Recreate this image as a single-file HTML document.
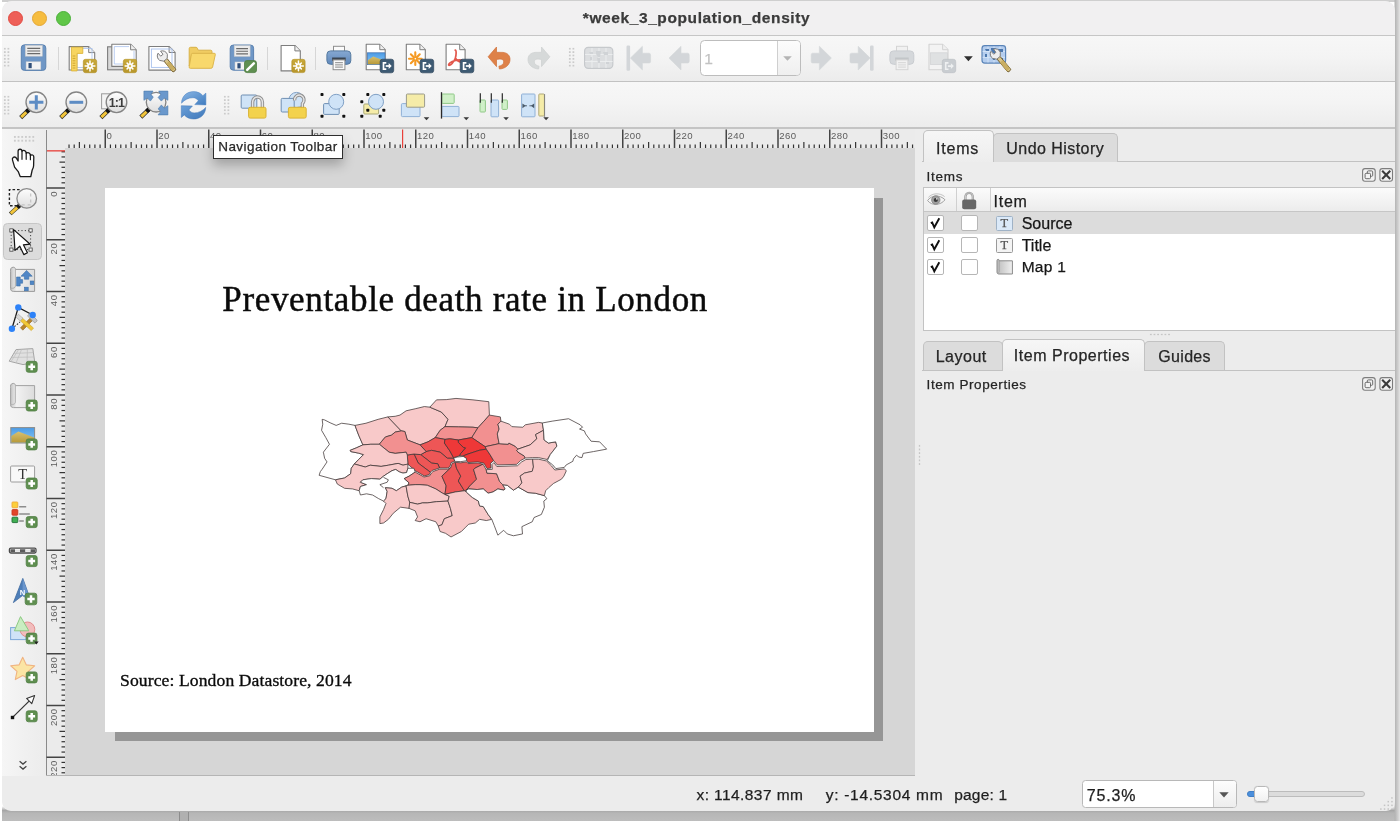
<!DOCTYPE html><html lang="en"><head><meta charset="utf-8"><title>*week_3_population_density</title><style>
*{box-sizing:border-box}
html,body{margin:0;padding:0}
body{width:1400px;height:822px;position:relative;overflow:hidden;background:#fff;font-family:"Liberation Sans",sans-serif;color:#222}
.abs{position:absolute}
#shadow{left:2px;top:0;width:1398px;height:821px;background:linear-gradient(90deg,rgba(0,0,0,0) 0,rgba(0,0,0,0) 1392px,#b4b4b4 1393px,#cfcfcf 1396px,#e4e4e4 1398px),linear-gradient(180deg,#cfcfcf 0,#cfcfcf 2px,rgba(0,0,0,0) 2px,rgba(0,0,0,0) 806px,#a6a6a6 810.5px,#b6b6b6 813px,#bdbdbd 821px)}
#win{left:2px;top:1px;width:1393px;height:810px;border-radius:10px 10px 9px 9px;background:#ececec;overflow:hidden}
#titlebar{left:0;top:0;width:1393px;height:34px;background:#f1f0f1}
#title{left:0;width:1393px;top:7px;text-align:center;font-weight:700;font-size:15.5px;letter-spacing:.6px;color:#3b3b3b;text-indent:-7px}
.tl{width:13px;height:13px;border-radius:50%;top:10.7px}
.hl{height:1px;background:#c3c3c3;left:0;width:1393px}
#tb1{left:0;top:35px;width:1393px;height:45px;background:#f5f5f5}
#tb2{left:0;top:81px;width:1393px;height:46px;background:#f4f4f4}
.rl{font-family:"Liberation Sans",sans-serif;font-size:9.6px;letter-spacing:.5px;fill:#5c5c5c;-webkit-text-stroke:0}
.tab{top:0;height:30px;border:1px solid #c2c2c2;border-bottom:none;border-radius:5px 5px 0 0;font-size:16px;color:#262626;text-align:center;background:#dcdcdc}
.tab.on{background:linear-gradient(#f6f6f6,#ededed);}
.ico{position:absolute;overflow:visible}
.cb{position:absolute;width:16.6px;height:16.2px;background:#fff;border:1.2px solid #b6b6b6;border-radius:2px}
.row{position:absolute;left:0;width:470px;height:22px;font-size:15px;letter-spacing:.2px;color:#1c1c1c}
.grip{position:absolute;width:7.2px;height:20.4px;background-image:radial-gradient(circle,#cbcbcb 0.75px,rgba(0,0,0,0) 1.15px);background-size:3.6px 3.4px}
.dt{position:absolute;font-size:13.5px;letter-spacing:.3px;color:#262626}
.st{position:absolute;top:786px;font-size:15.5px;color:#1e1e1e;white-space:pre}
</style></head><body><div id="shadow" class="abs"></div><div class="abs" style="left:179px;top:811.5px;width:10px;height:9.3px;background:#b0b0b0;border-left:1.3px solid #8c8c8c;border-right:1.8px solid #8e8e8e"></div><div id="win" class="abs"><div class="abs" style="left:-2px;top:-1px;width:1400px;height:822px;will-change:transform;-webkit-text-stroke:.25px"><div class="abs" style="left:0;top:0;width:1400px;height:35px;background:#f1f0f1"></div><div class="abs tl" style="left:7.9px;top:10.9px;width:15px;height:15px;background:#ee5f58;border:1px solid #e24b42"></div><div class="abs tl" style="left:32.1px;top:10.9px;width:15px;height:15px;background:#f6bd40;border:1px solid #e4a634"></div><div class="abs tl" style="left:56.3px;top:10.9px;width:15px;height:15px;background:#60c648;border:1px solid #4bb03a"></div><div id="title" class="abs" style="left:0;width:1400px;top:8.9px">*week_3_population_density</div><div class="abs" style="left:0;top:35px;width:1400px;height:1.4px;background:#c6c6c6"></div><div class="abs" style="left:0;top:36px;width:1400px;height:45px;background:linear-gradient(#f7f7f7,#f4f4f4 45%,#ececec)"></div><div class="abs" style="left:0;top:80.5px;width:1400px;height:1.6px;background:#c2c2c2"></div><div class="abs" style="left:0;top:82px;width:1400px;height:46px;background:linear-gradient(#f7f7f7,#f4f4f4 45%,#ececec)"></div><div class="abs" style="left:0;top:127.3px;width:1400px;height:1.5px;background:#c4c4c4"></div><div class="grip" style="left:2.9px;top:47.3px"></div><div class="abs" style="left:58px;top:47px;width:1px;height:23px;background:#d6d6d6"></div><div class="abs" style="left:267px;top:47px;width:1px;height:23px;background:#d6d6d6"></div><div class="abs" style="left:315px;top:47px;width:1px;height:23px;background:#d6d6d6"></div><div class="grip" style="left:568.1px;top:47.3px"></div><div class="abs" style="left:699.5px;top:40.3px;width:101.2px;height:36px;background:#fff;border:1.5px solid #bdbdbd;border-radius:4.5px;overflow:hidden"><div class="abs" style="left:76px;top:0;width:24px;height:34px;background:linear-gradient(#fcfcfc,#efefef);border-left:1px solid #cfcfcf"></div></div><div class="abs" style="left:704.3px;top:49.5px;font-size:15.5px;color:#c2c2c2">1</div><svg class="ico" style="left:783px;top:55.5px" width="9" height="5" viewBox="0 0 9 5"><path d="M0.2 0.2 H8.8 L4.5 4.8 Z" fill="#b4b4b4"/></svg><div class="grip" style="left:2.9px;top:94.6px"></div><div class="grip" style="left:222.5px;top:94.6px"></div><div class="abs" style="left:0;top:129px;width:46px;height:647px;background:linear-gradient(90deg,#f6f6f6,#efefef 30px,#ececec)"></div><div class="abs" style="left:12.8px;top:134.5px;width:22.1px;height:7.6px;background-image:radial-gradient(circle,#cbcbcb 0.75px,rgba(0,0,0,0) 1.15px);background-size:3.69px 3.8px"></div><div class="abs" style="left:3.3px;top:223.3px;width:38.5px;height:36.8px;border-radius:4.5px;background:#dcdcdc;border:1px solid #c6c6c6"></div><svg class="ico" style="left:18px;top:760px" width="10" height="12" viewBox="0 0 10 12"><path d="M1.6 1.3 L5 4.1 L8.4 1.3 M1.6 6.3 L5 9.1 L8.4 6.3" fill="none" stroke="#444" stroke-width="1.25"/></svg><div class="abs" style="left:46px;top:129px;width:869px;height:647px;background:#ebebeb"></div><div class="abs" style="left:65px;top:148px;width:850px;height:627.5px;background:#d6d6d6"></div><div class="abs" style="left:45.7px;top:129.5px;width:1.4px;height:646px;background:#8a8a8a"></div><div class="abs" style="left:46px;top:775px;width:869px;height:1px;background:#b5b5b5"></div><svg class="abs" style="left:0;top:0" width="920" height="775" viewBox="0 0 920 775"><rect x="68.43" y="144.5" width="1.2" height="3.5" fill="#333"/><rect x="73.60" y="144.5" width="1.2" height="3.5" fill="#333"/><rect x="78.78" y="142" width="1.2" height="6" fill="#333"/><rect x="83.95" y="144.5" width="1.2" height="3.5" fill="#333"/><rect x="89.12" y="144.5" width="1.2" height="3.5" fill="#333"/><rect x="94.30" y="144.5" width="1.2" height="3.5" fill="#333"/><rect x="99.48" y="144.5" width="1.2" height="3.5" fill="#333"/><rect x="104.50" y="129.5" width="1.5" height="18.5" fill="#444"/><text x="106.45" y="138.6" class="rl">0</text><rect x="109.83" y="144.5" width="1.2" height="3.5" fill="#333"/><rect x="115.00" y="144.5" width="1.2" height="3.5" fill="#333"/><rect x="120.18" y="144.5" width="1.2" height="3.5" fill="#333"/><rect x="125.35" y="144.5" width="1.2" height="3.5" fill="#333"/><rect x="130.53" y="142" width="1.2" height="6" fill="#333"/><rect x="135.70" y="144.5" width="1.2" height="3.5" fill="#333"/><rect x="140.88" y="144.5" width="1.2" height="3.5" fill="#333"/><rect x="146.05" y="144.5" width="1.2" height="3.5" fill="#333"/><rect x="151.22" y="144.5" width="1.2" height="3.5" fill="#333"/><rect x="156.25" y="129.5" width="1.5" height="18.5" fill="#444"/><text x="158.20" y="138.6" class="rl">20</text><rect x="161.58" y="144.5" width="1.2" height="3.5" fill="#333"/><rect x="166.75" y="144.5" width="1.2" height="3.5" fill="#333"/><rect x="171.92" y="144.5" width="1.2" height="3.5" fill="#333"/><rect x="177.10" y="144.5" width="1.2" height="3.5" fill="#333"/><rect x="182.28" y="142" width="1.2" height="6" fill="#333"/><rect x="187.45" y="144.5" width="1.2" height="3.5" fill="#333"/><rect x="192.62" y="144.5" width="1.2" height="3.5" fill="#333"/><rect x="197.80" y="144.5" width="1.2" height="3.5" fill="#333"/><rect x="202.97" y="144.5" width="1.2" height="3.5" fill="#333"/><rect x="208.00" y="129.5" width="1.5" height="18.5" fill="#444"/><text x="209.95" y="138.6" class="rl">40</text><rect x="213.33" y="144.5" width="1.2" height="3.5" fill="#333"/><rect x="218.50" y="144.5" width="1.2" height="3.5" fill="#333"/><rect x="223.67" y="144.5" width="1.2" height="3.5" fill="#333"/><rect x="228.85" y="144.5" width="1.2" height="3.5" fill="#333"/><rect x="234.03" y="142" width="1.2" height="6" fill="#333"/><rect x="239.20" y="144.5" width="1.2" height="3.5" fill="#333"/><rect x="244.38" y="144.5" width="1.2" height="3.5" fill="#333"/><rect x="249.55" y="144.5" width="1.2" height="3.5" fill="#333"/><rect x="254.72" y="144.5" width="1.2" height="3.5" fill="#333"/><rect x="259.75" y="129.5" width="1.5" height="18.5" fill="#444"/><text x="261.70" y="138.6" class="rl">60</text><rect x="265.07" y="144.5" width="1.2" height="3.5" fill="#333"/><rect x="270.25" y="144.5" width="1.2" height="3.5" fill="#333"/><rect x="275.42" y="144.5" width="1.2" height="3.5" fill="#333"/><rect x="280.60" y="144.5" width="1.2" height="3.5" fill="#333"/><rect x="285.77" y="142" width="1.2" height="6" fill="#333"/><rect x="290.95" y="144.5" width="1.2" height="3.5" fill="#333"/><rect x="296.12" y="144.5" width="1.2" height="3.5" fill="#333"/><rect x="301.30" y="144.5" width="1.2" height="3.5" fill="#333"/><rect x="306.47" y="144.5" width="1.2" height="3.5" fill="#333"/><rect x="311.50" y="129.5" width="1.5" height="18.5" fill="#444"/><text x="313.45" y="138.6" class="rl">80</text><rect x="316.82" y="144.5" width="1.2" height="3.5" fill="#333"/><rect x="322.00" y="144.5" width="1.2" height="3.5" fill="#333"/><rect x="327.17" y="144.5" width="1.2" height="3.5" fill="#333"/><rect x="332.35" y="144.5" width="1.2" height="3.5" fill="#333"/><rect x="337.52" y="142" width="1.2" height="6" fill="#333"/><rect x="342.70" y="144.5" width="1.2" height="3.5" fill="#333"/><rect x="347.88" y="144.5" width="1.2" height="3.5" fill="#333"/><rect x="353.05" y="144.5" width="1.2" height="3.5" fill="#333"/><rect x="358.22" y="144.5" width="1.2" height="3.5" fill="#333"/><rect x="363.25" y="129.5" width="1.5" height="18.5" fill="#444"/><text x="365.20" y="138.6" class="rl">100</text><rect x="368.57" y="144.5" width="1.2" height="3.5" fill="#333"/><rect x="373.75" y="144.5" width="1.2" height="3.5" fill="#333"/><rect x="378.92" y="144.5" width="1.2" height="3.5" fill="#333"/><rect x="384.10" y="144.5" width="1.2" height="3.5" fill="#333"/><rect x="389.27" y="142" width="1.2" height="6" fill="#333"/><rect x="394.45" y="144.5" width="1.2" height="3.5" fill="#333"/><rect x="399.62" y="144.5" width="1.2" height="3.5" fill="#333"/><rect x="404.80" y="144.5" width="1.2" height="3.5" fill="#333"/><rect x="409.97" y="144.5" width="1.2" height="3.5" fill="#333"/><rect x="415.00" y="129.5" width="1.5" height="18.5" fill="#444"/><text x="416.95" y="138.6" class="rl">120</text><rect x="420.32" y="144.5" width="1.2" height="3.5" fill="#333"/><rect x="425.50" y="144.5" width="1.2" height="3.5" fill="#333"/><rect x="430.67" y="144.5" width="1.2" height="3.5" fill="#333"/><rect x="435.85" y="144.5" width="1.2" height="3.5" fill="#333"/><rect x="441.02" y="142" width="1.2" height="6" fill="#333"/><rect x="446.20" y="144.5" width="1.2" height="3.5" fill="#333"/><rect x="451.37" y="144.5" width="1.2" height="3.5" fill="#333"/><rect x="456.55" y="144.5" width="1.2" height="3.5" fill="#333"/><rect x="461.72" y="144.5" width="1.2" height="3.5" fill="#333"/><rect x="466.75" y="129.5" width="1.5" height="18.5" fill="#444"/><text x="468.70" y="138.6" class="rl">140</text><rect x="472.07" y="144.5" width="1.2" height="3.5" fill="#333"/><rect x="477.25" y="144.5" width="1.2" height="3.5" fill="#333"/><rect x="482.42" y="144.5" width="1.2" height="3.5" fill="#333"/><rect x="487.60" y="144.5" width="1.2" height="3.5" fill="#333"/><rect x="492.77" y="142" width="1.2" height="6" fill="#333"/><rect x="497.95" y="144.5" width="1.2" height="3.5" fill="#333"/><rect x="503.12" y="144.5" width="1.2" height="3.5" fill="#333"/><rect x="508.30" y="144.5" width="1.2" height="3.5" fill="#333"/><rect x="513.48" y="144.5" width="1.2" height="3.5" fill="#333"/><rect x="518.50" y="129.5" width="1.5" height="18.5" fill="#444"/><text x="520.45" y="138.6" class="rl">160</text><rect x="523.82" y="144.5" width="1.2" height="3.5" fill="#333"/><rect x="529.00" y="144.5" width="1.2" height="3.5" fill="#333"/><rect x="534.17" y="144.5" width="1.2" height="3.5" fill="#333"/><rect x="539.35" y="144.5" width="1.2" height="3.5" fill="#333"/><rect x="544.52" y="142" width="1.2" height="6" fill="#333"/><rect x="549.70" y="144.5" width="1.2" height="3.5" fill="#333"/><rect x="554.87" y="144.5" width="1.2" height="3.5" fill="#333"/><rect x="560.05" y="144.5" width="1.2" height="3.5" fill="#333"/><rect x="565.23" y="144.5" width="1.2" height="3.5" fill="#333"/><rect x="570.25" y="129.5" width="1.5" height="18.5" fill="#444"/><text x="572.20" y="138.6" class="rl">180</text><rect x="575.57" y="144.5" width="1.2" height="3.5" fill="#333"/><rect x="580.75" y="144.5" width="1.2" height="3.5" fill="#333"/><rect x="585.92" y="144.5" width="1.2" height="3.5" fill="#333"/><rect x="591.10" y="144.5" width="1.2" height="3.5" fill="#333"/><rect x="596.27" y="142" width="1.2" height="6" fill="#333"/><rect x="601.45" y="144.5" width="1.2" height="3.5" fill="#333"/><rect x="606.62" y="144.5" width="1.2" height="3.5" fill="#333"/><rect x="611.80" y="144.5" width="1.2" height="3.5" fill="#333"/><rect x="616.97" y="144.5" width="1.2" height="3.5" fill="#333"/><rect x="622.00" y="129.5" width="1.5" height="18.5" fill="#444"/><text x="623.95" y="138.6" class="rl">200</text><rect x="627.32" y="144.5" width="1.2" height="3.5" fill="#333"/><rect x="632.50" y="144.5" width="1.2" height="3.5" fill="#333"/><rect x="637.67" y="144.5" width="1.2" height="3.5" fill="#333"/><rect x="642.85" y="144.5" width="1.2" height="3.5" fill="#333"/><rect x="648.02" y="142" width="1.2" height="6" fill="#333"/><rect x="653.20" y="144.5" width="1.2" height="3.5" fill="#333"/><rect x="658.38" y="144.5" width="1.2" height="3.5" fill="#333"/><rect x="663.55" y="144.5" width="1.2" height="3.5" fill="#333"/><rect x="668.72" y="144.5" width="1.2" height="3.5" fill="#333"/><rect x="673.75" y="129.5" width="1.5" height="18.5" fill="#444"/><text x="675.70" y="138.6" class="rl">220</text><rect x="679.07" y="144.5" width="1.2" height="3.5" fill="#333"/><rect x="684.25" y="144.5" width="1.2" height="3.5" fill="#333"/><rect x="689.42" y="144.5" width="1.2" height="3.5" fill="#333"/><rect x="694.60" y="144.5" width="1.2" height="3.5" fill="#333"/><rect x="699.77" y="142" width="1.2" height="6" fill="#333"/><rect x="704.95" y="144.5" width="1.2" height="3.5" fill="#333"/><rect x="710.12" y="144.5" width="1.2" height="3.5" fill="#333"/><rect x="715.30" y="144.5" width="1.2" height="3.5" fill="#333"/><rect x="720.47" y="144.5" width="1.2" height="3.5" fill="#333"/><rect x="725.50" y="129.5" width="1.5" height="18.5" fill="#444"/><text x="727.45" y="138.6" class="rl">240</text><rect x="730.82" y="144.5" width="1.2" height="3.5" fill="#333"/><rect x="736.00" y="144.5" width="1.2" height="3.5" fill="#333"/><rect x="741.17" y="144.5" width="1.2" height="3.5" fill="#333"/><rect x="746.35" y="144.5" width="1.2" height="3.5" fill="#333"/><rect x="751.52" y="142" width="1.2" height="6" fill="#333"/><rect x="756.70" y="144.5" width="1.2" height="3.5" fill="#333"/><rect x="761.88" y="144.5" width="1.2" height="3.5" fill="#333"/><rect x="767.05" y="144.5" width="1.2" height="3.5" fill="#333"/><rect x="772.22" y="144.5" width="1.2" height="3.5" fill="#333"/><rect x="777.25" y="129.5" width="1.5" height="18.5" fill="#444"/><text x="779.20" y="138.6" class="rl">260</text><rect x="782.57" y="144.5" width="1.2" height="3.5" fill="#333"/><rect x="787.75" y="144.5" width="1.2" height="3.5" fill="#333"/><rect x="792.92" y="144.5" width="1.2" height="3.5" fill="#333"/><rect x="798.10" y="144.5" width="1.2" height="3.5" fill="#333"/><rect x="803.27" y="142" width="1.2" height="6" fill="#333"/><rect x="808.45" y="144.5" width="1.2" height="3.5" fill="#333"/><rect x="813.62" y="144.5" width="1.2" height="3.5" fill="#333"/><rect x="818.80" y="144.5" width="1.2" height="3.5" fill="#333"/><rect x="823.97" y="144.5" width="1.2" height="3.5" fill="#333"/><rect x="829.00" y="129.5" width="1.5" height="18.5" fill="#444"/><text x="830.95" y="138.6" class="rl">280</text><rect x="834.32" y="144.5" width="1.2" height="3.5" fill="#333"/><rect x="839.50" y="144.5" width="1.2" height="3.5" fill="#333"/><rect x="844.67" y="144.5" width="1.2" height="3.5" fill="#333"/><rect x="849.85" y="144.5" width="1.2" height="3.5" fill="#333"/><rect x="855.02" y="142" width="1.2" height="6" fill="#333"/><rect x="860.20" y="144.5" width="1.2" height="3.5" fill="#333"/><rect x="865.38" y="144.5" width="1.2" height="3.5" fill="#333"/><rect x="870.55" y="144.5" width="1.2" height="3.5" fill="#333"/><rect x="875.72" y="144.5" width="1.2" height="3.5" fill="#333"/><rect x="880.75" y="129.5" width="1.5" height="18.5" fill="#444"/><text x="882.70" y="138.6" class="rl">300</text><rect x="886.07" y="144.5" width="1.2" height="3.5" fill="#333"/><rect x="891.25" y="144.5" width="1.2" height="3.5" fill="#333"/><rect x="896.42" y="144.5" width="1.2" height="3.5" fill="#333"/><rect x="901.60" y="144.5" width="1.2" height="3.5" fill="#333"/><rect x="906.77" y="142" width="1.2" height="6" fill="#333"/><rect x="911.95" y="144.5" width="1.2" height="3.5" fill="#333"/><rect x="61.5" y="151.18" width="3.5" height="1.2" fill="#333"/><rect x="61.5" y="156.35" width="3.5" height="1.2" fill="#333"/><rect x="59.5" y="161.53" width="5.5" height="1.2" fill="#333"/><rect x="61.5" y="166.70" width="3.5" height="1.2" fill="#333"/><rect x="61.5" y="171.88" width="3.5" height="1.2" fill="#333"/><rect x="61.5" y="177.05" width="3.5" height="1.2" fill="#333"/><rect x="61.5" y="182.22" width="3.5" height="1.2" fill="#333"/><rect x="46.5" y="187.25" width="18.5" height="1.5" fill="#444"/><text transform="translate(56.5,191.00) rotate(-90)" text-anchor="end" class="rl">0</text><rect x="61.5" y="192.58" width="3.5" height="1.2" fill="#333"/><rect x="61.5" y="197.75" width="3.5" height="1.2" fill="#333"/><rect x="61.5" y="202.93" width="3.5" height="1.2" fill="#333"/><rect x="61.5" y="208.10" width="3.5" height="1.2" fill="#333"/><rect x="59.5" y="213.28" width="5.5" height="1.2" fill="#333"/><rect x="61.5" y="218.45" width="3.5" height="1.2" fill="#333"/><rect x="61.5" y="223.62" width="3.5" height="1.2" fill="#333"/><rect x="61.5" y="228.80" width="3.5" height="1.2" fill="#333"/><rect x="61.5" y="233.97" width="3.5" height="1.2" fill="#333"/><rect x="46.5" y="239.00" width="18.5" height="1.5" fill="#444"/><text transform="translate(56.5,242.75) rotate(-90)" text-anchor="end" class="rl">20</text><rect x="61.5" y="244.33" width="3.5" height="1.2" fill="#333"/><rect x="61.5" y="249.50" width="3.5" height="1.2" fill="#333"/><rect x="61.5" y="254.67" width="3.5" height="1.2" fill="#333"/><rect x="61.5" y="259.85" width="3.5" height="1.2" fill="#333"/><rect x="59.5" y="265.02" width="5.5" height="1.2" fill="#333"/><rect x="61.5" y="270.20" width="3.5" height="1.2" fill="#333"/><rect x="61.5" y="275.38" width="3.5" height="1.2" fill="#333"/><rect x="61.5" y="280.55" width="3.5" height="1.2" fill="#333"/><rect x="61.5" y="285.72" width="3.5" height="1.2" fill="#333"/><rect x="46.5" y="290.75" width="18.5" height="1.5" fill="#444"/><text transform="translate(56.5,294.50) rotate(-90)" text-anchor="end" class="rl">40</text><rect x="61.5" y="296.07" width="3.5" height="1.2" fill="#333"/><rect x="61.5" y="301.25" width="3.5" height="1.2" fill="#333"/><rect x="61.5" y="306.42" width="3.5" height="1.2" fill="#333"/><rect x="61.5" y="311.60" width="3.5" height="1.2" fill="#333"/><rect x="59.5" y="316.77" width="5.5" height="1.2" fill="#333"/><rect x="61.5" y="321.95" width="3.5" height="1.2" fill="#333"/><rect x="61.5" y="327.12" width="3.5" height="1.2" fill="#333"/><rect x="61.5" y="332.30" width="3.5" height="1.2" fill="#333"/><rect x="61.5" y="337.47" width="3.5" height="1.2" fill="#333"/><rect x="46.5" y="342.50" width="18.5" height="1.5" fill="#444"/><text transform="translate(56.5,346.25) rotate(-90)" text-anchor="end" class="rl">60</text><rect x="61.5" y="347.82" width="3.5" height="1.2" fill="#333"/><rect x="61.5" y="353.00" width="3.5" height="1.2" fill="#333"/><rect x="61.5" y="358.17" width="3.5" height="1.2" fill="#333"/><rect x="61.5" y="363.35" width="3.5" height="1.2" fill="#333"/><rect x="59.5" y="368.52" width="5.5" height="1.2" fill="#333"/><rect x="61.5" y="373.70" width="3.5" height="1.2" fill="#333"/><rect x="61.5" y="378.88" width="3.5" height="1.2" fill="#333"/><rect x="61.5" y="384.05" width="3.5" height="1.2" fill="#333"/><rect x="61.5" y="389.22" width="3.5" height="1.2" fill="#333"/><rect x="46.5" y="394.25" width="18.5" height="1.5" fill="#444"/><text transform="translate(56.5,398.00) rotate(-90)" text-anchor="end" class="rl">80</text><rect x="61.5" y="399.57" width="3.5" height="1.2" fill="#333"/><rect x="61.5" y="404.75" width="3.5" height="1.2" fill="#333"/><rect x="61.5" y="409.92" width="3.5" height="1.2" fill="#333"/><rect x="61.5" y="415.10" width="3.5" height="1.2" fill="#333"/><rect x="59.5" y="420.27" width="5.5" height="1.2" fill="#333"/><rect x="61.5" y="425.45" width="3.5" height="1.2" fill="#333"/><rect x="61.5" y="430.62" width="3.5" height="1.2" fill="#333"/><rect x="61.5" y="435.80" width="3.5" height="1.2" fill="#333"/><rect x="61.5" y="440.97" width="3.5" height="1.2" fill="#333"/><rect x="46.5" y="446.00" width="18.5" height="1.5" fill="#444"/><text transform="translate(56.5,449.75) rotate(-90)" text-anchor="end" class="rl">100</text><rect x="61.5" y="451.32" width="3.5" height="1.2" fill="#333"/><rect x="61.5" y="456.50" width="3.5" height="1.2" fill="#333"/><rect x="61.5" y="461.67" width="3.5" height="1.2" fill="#333"/><rect x="61.5" y="466.85" width="3.5" height="1.2" fill="#333"/><rect x="59.5" y="472.02" width="5.5" height="1.2" fill="#333"/><rect x="61.5" y="477.20" width="3.5" height="1.2" fill="#333"/><rect x="61.5" y="482.37" width="3.5" height="1.2" fill="#333"/><rect x="61.5" y="487.55" width="3.5" height="1.2" fill="#333"/><rect x="61.5" y="492.72" width="3.5" height="1.2" fill="#333"/><rect x="46.5" y="497.75" width="18.5" height="1.5" fill="#444"/><text transform="translate(56.5,501.50) rotate(-90)" text-anchor="end" class="rl">120</text><rect x="61.5" y="503.07" width="3.5" height="1.2" fill="#333"/><rect x="61.5" y="508.25" width="3.5" height="1.2" fill="#333"/><rect x="61.5" y="513.42" width="3.5" height="1.2" fill="#333"/><rect x="61.5" y="518.60" width="3.5" height="1.2" fill="#333"/><rect x="59.5" y="523.77" width="5.5" height="1.2" fill="#333"/><rect x="61.5" y="528.95" width="3.5" height="1.2" fill="#333"/><rect x="61.5" y="534.12" width="3.5" height="1.2" fill="#333"/><rect x="61.5" y="539.30" width="3.5" height="1.2" fill="#333"/><rect x="61.5" y="544.48" width="3.5" height="1.2" fill="#333"/><rect x="46.5" y="549.50" width="18.5" height="1.5" fill="#444"/><text transform="translate(56.5,553.25) rotate(-90)" text-anchor="end" class="rl">140</text><rect x="61.5" y="554.82" width="3.5" height="1.2" fill="#333"/><rect x="61.5" y="560.00" width="3.5" height="1.2" fill="#333"/><rect x="61.5" y="565.17" width="3.5" height="1.2" fill="#333"/><rect x="61.5" y="570.35" width="3.5" height="1.2" fill="#333"/><rect x="59.5" y="575.52" width="5.5" height="1.2" fill="#333"/><rect x="61.5" y="580.70" width="3.5" height="1.2" fill="#333"/><rect x="61.5" y="585.87" width="3.5" height="1.2" fill="#333"/><rect x="61.5" y="591.05" width="3.5" height="1.2" fill="#333"/><rect x="61.5" y="596.23" width="3.5" height="1.2" fill="#333"/><rect x="46.5" y="601.25" width="18.5" height="1.5" fill="#444"/><text transform="translate(56.5,605.00) rotate(-90)" text-anchor="end" class="rl">160</text><rect x="61.5" y="606.57" width="3.5" height="1.2" fill="#333"/><rect x="61.5" y="611.75" width="3.5" height="1.2" fill="#333"/><rect x="61.5" y="616.92" width="3.5" height="1.2" fill="#333"/><rect x="61.5" y="622.10" width="3.5" height="1.2" fill="#333"/><rect x="59.5" y="627.27" width="5.5" height="1.2" fill="#333"/><rect x="61.5" y="632.45" width="3.5" height="1.2" fill="#333"/><rect x="61.5" y="637.62" width="3.5" height="1.2" fill="#333"/><rect x="61.5" y="642.80" width="3.5" height="1.2" fill="#333"/><rect x="61.5" y="647.98" width="3.5" height="1.2" fill="#333"/><rect x="46.5" y="653.00" width="18.5" height="1.5" fill="#444"/><text transform="translate(56.5,656.75) rotate(-90)" text-anchor="end" class="rl">180</text><rect x="61.5" y="658.32" width="3.5" height="1.2" fill="#333"/><rect x="61.5" y="663.50" width="3.5" height="1.2" fill="#333"/><rect x="61.5" y="668.67" width="3.5" height="1.2" fill="#333"/><rect x="61.5" y="673.85" width="3.5" height="1.2" fill="#333"/><rect x="59.5" y="679.02" width="5.5" height="1.2" fill="#333"/><rect x="61.5" y="684.20" width="3.5" height="1.2" fill="#333"/><rect x="61.5" y="689.37" width="3.5" height="1.2" fill="#333"/><rect x="61.5" y="694.55" width="3.5" height="1.2" fill="#333"/><rect x="61.5" y="699.72" width="3.5" height="1.2" fill="#333"/><rect x="46.5" y="704.75" width="18.5" height="1.5" fill="#444"/><text transform="translate(56.5,708.50) rotate(-90)" text-anchor="end" class="rl">200</text><rect x="61.5" y="710.07" width="3.5" height="1.2" fill="#333"/><rect x="61.5" y="715.25" width="3.5" height="1.2" fill="#333"/><rect x="61.5" y="720.42" width="3.5" height="1.2" fill="#333"/><rect x="61.5" y="725.60" width="3.5" height="1.2" fill="#333"/><rect x="59.5" y="730.77" width="5.5" height="1.2" fill="#333"/><rect x="61.5" y="735.95" width="3.5" height="1.2" fill="#333"/><rect x="61.5" y="741.12" width="3.5" height="1.2" fill="#333"/><rect x="61.5" y="746.30" width="3.5" height="1.2" fill="#333"/><rect x="61.5" y="751.47" width="3.5" height="1.2" fill="#333"/><rect x="46.5" y="756.50" width="18.5" height="1.5" fill="#444"/><text transform="translate(56.5,760.25) rotate(-90)" text-anchor="end" class="rl">220</text><rect x="61.5" y="761.82" width="3.5" height="1.2" fill="#333"/><rect x="61.5" y="767.00" width="3.5" height="1.2" fill="#333"/><rect x="61.5" y="772.17" width="3.5" height="1.2" fill="#333"/><rect x="402" y="129.5" width="1.2" height="18.5" fill="#e8403a"/><rect x="47" y="150.2" width="18" height="1.3" fill="#e8403a"/></svg><div class="abs" style="left:114.5px;top:197.5px;width:768.5px;height:543.5px;background:#969696"></div><div class="abs" style="left:105.3px;top:188px;width:768.6px;height:543.5px;background:#fff"></div><div class="abs" style="left:222.3px;top:279.6px;font-family:'Liberation Serif',serif;font-size:35px;letter-spacing:.66px;color:#0a0a0a;-webkit-text-stroke:.5px #111;white-space:pre;line-height:40px">Preventable death rate in London</div><div class="abs" style="left:120px;top:669.9px;font-family:'Liberation Serif',serif;font-size:17.6px;letter-spacing:.1px;color:#0a0a0a;-webkit-text-stroke:.35px #111;white-space:pre;line-height:20px">Source: London Datastore, 2014</div><svg class="abs" style="left:0;top:0" width="1400" height="822" viewBox="0 0 1400 822"><g stroke="#3e3434" stroke-width="0.75" stroke-linejoin="round"><polygon points="322.17,419.33 324.6,419.94 330.07,422.74 336.16,425.41 341.63,423.22 348.93,424.2 355.01,425.41 358.66,435.15 362.92,444.88 356.23,447.92 350.15,450.35 350.75,451.57 358.66,453.15 363.53,454.61 358.66,459.48 354.33,463.99 351.29,468.25 350.68,473.72 344.6,477.98 335.47,479.81 319.12,475.29 320.34,471.64 322.17,469.21 327.03,461.91 324.6,458.26 323.38,452.18 329.46,444.27 325.82,437.58 321.56,430.28 322.77,424.2" fill="#ffffff"/><polygon points="355.01,425.41 365.96,423.22 378.13,419.33 387.86,416.9 401.24,430.89 395.16,432.1 391.51,435.15 385.43,436.97 381.78,441.23 379.34,444.27 370.83,444.27 362.92,444.88 358.66,435.15" fill="#f8c9c9"/><polygon points="387.86,416.9 395.16,416.29 400.0,415.07 406.08,410.82 415.82,408.63 424.33,406.56 429.81,407.17 441.36,412.03 448.05,419.33 445.01,426.63 440.15,430.28 435.28,437.58 427.98,441.84 420.07,444.88 407.3,440.01 404.87,431.5 401.24,430.89" fill="#f8c9c9"/><polygon points="429.81,407.17 436.5,399.87 446.23,399.62 455.96,398.41 472.99,399.87 488.81,401.69 489.42,415.07 483.94,421.16 477.86,427.85 472.99,427.24 458.39,426.87 445.01,426.63 448.05,419.33 441.36,412.03" fill="#f8c9c9"/><polygon points="445.01,426.63 458.39,426.87 472.99,427.24 477.86,427.85 471.78,437.58 458.39,440.01 449.88,438.8 445.01,439.4 435.28,437.58 440.15,430.28" fill="#f29090"/><polygon points="489.42,415.07 500.34,416.9 500.95,421.16 497.91,424.2 499.12,429.06 497.3,433.93 499.12,443.66 485.16,446.7 471.78,437.58 477.86,427.85 483.94,421.16" fill="#f29090"/><polygon points="420.07,444.88 427.98,441.84 435.28,437.58 445.01,439.4 444.4,443.05 449.88,450.96 453.53,457.65 453.53,458.26 447.45,458.26 440.15,452.18 431.63,450.35 426.16,451.57" fill="#ee5656"/><polygon points="445.01,439.4 449.88,438.8 458.39,440.01 458.39,442.45 463.26,447.31 465.69,447.92 460.83,453.39 459.61,455.83 453.53,457.65 449.88,450.96 444.4,443.05" fill="#ee3838"/><polygon points="458.39,440.01 471.78,437.58 485.16,446.7 486.37,449.14 479.08,450.35 468.13,454.0 463.26,455.83 459.61,455.83 460.83,453.39 465.69,447.92 463.26,447.31 458.39,442.45" fill="#ee3838"/><polygon points="463.26,455.83 468.13,454.0 479.08,450.35 486.37,449.14 490.02,454.61 493.67,460.69 490.63,463.13 491.0,467.99 486.98,468.6 483.94,463.13 477.86,461.91 468.13,462.52 466.67,460.69 466.3,458.26 463.26,456.44" fill="#ee3838"/><polygon points="453.53,458.26 457.18,457.04 463.26,456.44 466.3,458.26 466.67,460.69 460.83,461.67 454.74,461.3" fill="#ffffff"/><polygon points="426.16,451.57 431.63,450.35 440.15,452.18 447.45,458.26 453.53,458.26 454.74,461.3 451.09,462.52 449.88,466.78 447.45,467.99 439.54,467.99 437.71,463.73 431.63,463.13 420.68,454.61" fill="#ee5656"/><polygon points="413.99,454.0 420.68,454.61 431.63,463.13 437.71,463.73 439.54,467.99 432.24,470.43 430.41,472.25 418.25,463.13" fill="#ee5656"/><polygon points="407.3,455.0 413.99,454.0 418.25,463.13 430.41,472.25 429.2,474.68 424.33,475.9 415.82,471.03 407.91,464.34" fill="#ee5656"/><polygon points="401.24,430.89 404.87,431.5 407.3,440.01 420.07,444.88 426.16,451.57 420.68,454.61 413.99,454.0 407.3,455.0 406.11,452.18 395.16,453.39 389.08,452.18 379.34,444.27 381.78,441.23 385.43,436.97 391.51,435.15 395.16,432.1" fill="#f29090"/><polygon points="350.15,450.35 356.23,447.92 362.92,444.88 370.83,444.27 379.34,444.27 389.08,452.18 395.16,453.39 406.11,452.18 407.3,455.0 407.91,464.34 402.99,465.21 398.13,463.38 388.39,465.21 381.09,466.42 370.15,465.21 365.28,467.03 354.33,463.99 358.66,459.48 363.53,454.61 358.66,453.15 350.75,451.57" fill="#f8c9c9"/><polygon points="354.33,463.99 365.28,467.03 370.15,465.21 381.09,466.42 388.39,465.21 398.13,463.38 402.99,465.21 407.86,463.99 407.86,468.25 406.64,472.51 402.99,473.11 399.34,471.9 395.69,469.46 392.04,470.68 387.18,473.72 383.53,476.16 379.88,479.2 371.36,478.59 362.85,479.81 360.41,482.24 366.5,484.67 360.41,486.5 359.2,490.75 352.51,488.93 344.6,488.32 337.3,484.06 335.47,479.81 344.6,477.98 350.68,473.72 351.29,468.25" fill="#f8c9c9"/><polygon points="360.41,482.24 362.85,479.81 371.36,478.59 379.88,479.2 383.53,476.16 387.18,473.72 392.04,470.68 395.69,469.46 399.34,471.9 402.99,473.11 406.64,472.51 407.86,468.25 413.94,468.25 415.2,472.1 409.08,476.16 404.21,478.59 409.08,482.85 407.86,485.28 406.03,485.89 401.78,487.1 396.3,490.75 392.04,488.32 385.35,487.71 387.18,491.36 385.96,498.66 383.53,501.09 378.66,498.66 372.58,495.01 366.5,493.8 360.41,495.01 359.2,490.75 360.41,486.5 366.5,484.67" fill="#ffffff"/><polygon points="387.18,491.36 385.35,487.71 392.04,488.32 396.3,490.75 401.78,487.1 406.03,485.89 407.86,496.23 409.68,502.31 409.08,508.39 400.56,507.18 393.26,513.26 388.39,519.34 383.53,522.99 379.88,523.6 379.88,516.91 383.53,509.61 385.96,503.53 383.53,501.09 385.96,498.66" fill="#f8c9c9"/><polygon points="404.21,478.59 409.08,476.16 415.2,472.1 424.0,477.0 429.7,475.8 431.4,473.1 433.0,471.5 439.8,469.1 447.6,469.1 450.7,467.8 441.9,476.16 446.16,485.89 444.94,494.4 442.51,493.19 435.82,488.93 427.3,485.28 420.0,484.67 415.16,484.67 407.86,485.28 409.08,482.85" fill="#f29090"/><polygon points="450.7,467.8 452.2,463.3 455.2,462.4 456.5,468.25 460.75,476.16 458.32,481.02 464.4,490.75 455.28,491.97 444.94,494.4 446.16,485.89 441.9,476.16" fill="#ee5656"/><polygon points="455.2,462.4 460.8,462.8 466.7,461.9 468.1,463.6 477.9,463.0 483.1,464.2 475.96,467.64 473.53,469.46 476.57,479.2 469.88,485.89 466.23,490.15 464.4,490.75 458.32,481.02 460.75,476.16 456.5,468.25" fill="#ee5656"/><polygon points="475.96,467.64 483.1,464.2 486.2,469.7 486.91,473.11 496.64,473.72 499.68,481.63 502.73,484.67 505.16,488.93 503.94,490.15 497.86,488.93 492.99,491.97 488.13,493.19 483.26,488.93 477.18,489.54 468.66,488.93 466.23,490.15 469.88,485.89 476.57,479.2 473.53,469.46" fill="#f29090"/><polygon points="406.03,485.89 407.86,485.28 415.16,484.67 420.0,484.67 427.3,485.28 435.82,488.93 442.51,493.19 444.94,494.4 449.2,496.23 447.98,501.09 436.42,501.7 427.3,502.92 422.46,502.92 417.59,504.14 409.68,502.31 407.86,496.23" fill="#f8c9c9"/><polygon points="409.68,502.31 417.59,504.14 422.46,502.92 427.3,502.92 436.42,501.7 447.98,501.09 450.41,508.39 452.24,515.69 444.33,518.73 441.9,524.82 438.25,526.03 435.82,521.78 426.08,518.73 420.02,521.78 415.16,520.56 417.59,516.91 415.16,510.83 409.08,508.39" fill="#f8c9c9"/><polygon points="444.94,494.4 455.28,491.97 464.4,490.75 466.23,491.97 472.31,497.45 478.39,501.09 479.61,505.96 483.26,506.57 488.13,514.48 491.78,519.34 486.3,520.56 479.61,519.34 475.35,522.99 468.66,524.21 465.01,527.86 461.36,531.51 451.02,536.98 445.55,533.33 440.07,531.51 438.25,526.03 441.9,524.82 444.33,518.73 452.24,515.69 450.41,508.39 447.98,501.09 449.2,496.23" fill="#f8c9c9"/><polygon points="466.23,490.15 468.66,488.93 477.18,489.54 483.26,488.93 488.13,493.19 492.99,491.97 497.86,488.93 503.94,490.15 505.16,488.93 502.73,484.67 507.3,485.28 513.38,490.15 518.25,487.1 527.98,492.58 535.28,493.19 544.4,495.62 546.84,498.66 543.8,501.09 544.4,507.18 541.36,514.48 534.06,517.52 532.24,521.78 521.9,526.64 522.51,533.94 513.38,535.77 507.3,533.94 503.65,530.29 497.86,535.16 494.21,525.43 491.78,519.34 488.13,514.48 483.26,506.57 479.61,505.96 478.39,501.09 472.31,497.45 466.23,491.97" fill="#ffffff"/><polygon points="486.91,473.11 486.2,469.7 492.3,469.3 492.0,464.5 493.9,462.6 496.8,466.5 517.4,465.8 521.5,462.0 525.9,459.5 532.6,459.2 533.45,467.03 532.24,471.29 524.33,473.11 520.07,476.16 521.9,482.85 518.25,487.1 513.38,490.15 507.3,485.28 502.73,484.67 499.68,481.63 496.64,473.72" fill="#f8c9c9"/><polygon points="532.6,459.2 538.7,459.2 546.5,461.0 551.6,466.0 554.8,470.0 564.6,468.9 566.3,470.9 563.87,476.16 561.44,479.2 553.53,483.45 548.66,487.71 545.62,490.75 544.4,495.62 535.28,493.19 527.98,492.58 518.25,487.1 521.9,482.85 520.07,476.16 524.33,473.11 532.24,471.29 533.45,467.03" fill="#f8c9c9"/><polygon points="485.16,446.7 499.12,443.66 508.25,444.27 508.86,443.05 514.94,446.09 517.98,449.14 516.76,450.35 517.98,452.18 524.06,455.83 525.28,458.02 520.41,460.69 516.76,464.34 497.3,464.95 493.67,460.69 490.02,454.61 486.37,449.14" fill="#f29090"/><polygon points="500.95,421.16 509.46,424.2 511.9,426.63 522.85,427.24 525.28,424.81 538.66,422.37 542.31,422.98 543.53,430.28 535.62,434.54 536.84,438.8 530.15,444.88 517.98,449.14 514.94,446.09 508.86,443.05 508.25,444.27 499.12,443.66 497.3,433.93 499.12,429.06 497.91,424.2" fill="#f8c9c9"/><polygon points="517.98,449.14 530.15,444.88 536.84,438.8 535.62,434.54 543.53,430.28 544.14,440.01 548.39,443.05 555.69,441.84 556.91,446.09 550.22,454.61 547.18,459.48 538.66,457.65 532.58,457.65 525.28,458.02 524.06,455.83 517.98,452.18 516.76,450.35" fill="#f8c9c9"/><polygon points="542.31,422.98 552.17,421.16 568.59,418.72 580.15,424.81 582.58,427.24 579.54,429.06 584.4,430.89 585.62,433.93 591.09,441.23 599.61,441.84 606.67,449.14 593.53,451.57 583.19,453.39 581.97,457.65 578.93,457.04 576.5,455.22 573.45,458.87 572.85,461.3 566.16,464.95 564.33,467.38 555.82,468.6 552.77,464.95 547.3,460.69 550.22,454.61 556.91,446.09 555.69,441.84 548.39,443.05 544.14,440.01 543.53,430.28" fill="#ffffff"/><polyline points="383.53,477.37 388.39,479.81 387.18,482.24 379.88,484.67 383.53,487.71" fill="none"/></g></svg><div class="abs" style="left:213px;top:135px;width:129.5px;height:23.5px;background:#fff;border:1px solid #2e2e2e;box-shadow:0 6px 12px rgba(0,0,0,.25);font-size:13.5px;letter-spacing:.44px;color:#2a2a2a;line-height:21px;padding-left:4.2px;white-space:pre">Navigation Toolbar</div><div class="abs" style="left:917.7px;top:443.7px;width:3px;height:21.9px;background-image:radial-gradient(circle,#c6c6c6 0.75px,rgba(0,0,0,0) 1.15px);background-size:3px 3.65px"></div><div class="abs" style="left:922px;top:161px;width:473px;height:1px;background:#c2c2c2"></div><div class="abs tab" style="left:993px;top:132.6px;width:124.5px;height:29px;line-height:29px;letter-spacing:.45px">Undo History</div><div class="abs tab on" style="left:922.5px;top:129.9px;width:71px;height:32px;line-height:35.5px;letter-spacing:.8px;text-indent:-1px">Items</div><div class="dt" style="left:926.4px;top:168.5px;letter-spacing:.75px">Items</div><svg class="ico" style="left:1362px;top:168px" width="32" height="14" viewBox="0 0 32 14"><rect x="0.6" y="0.6" width="12.6" height="12.6" rx="2.4" fill="#f2f2f2" stroke="#7d7d7d" stroke-width="1.1"/><rect x="5.3" y="2.9" width="5.4" height="5.4" rx="1" fill="none" stroke="#6a6a6a" stroke-width="1"/><rect x="3.1" y="5.3" width="5.4" height="5.4" rx="1" fill="#f2f2f2" stroke="#6a6a6a" stroke-width="1"/><rect x="17.9" y="0.6" width="12.6" height="12.6" rx="2.4" fill="#f2f2f2" stroke="#7d7d7d" stroke-width="1.1"/><path d="M20.9 3.6 L27.5 10.2 M27.5 3.6 L20.9 10.2" stroke="#3c3c3c" stroke-width="2.1" stroke-linecap="square"/></svg><div class="abs" style="left:922.5px;top:187px;width:473px;height:143.5px;background:#fff;border:1px solid #c3c3c3;border-right:none"></div><div class="abs" style="left:923.5px;top:188px;width:472px;height:23.5px;background:linear-gradient(#fbfbfb,#ececec);border-bottom:1px solid #c6c6c6"></div><div class="abs" style="left:956px;top:188px;width:1px;height:23px;background:#d0d0d0"></div><div class="abs" style="left:990px;top:188px;width:1px;height:23px;background:#d0d0d0"></div><div class="abs" style="left:993.4px;top:192.6px;font-size:16px;letter-spacing:.8px;color:#1e1e1e">Item</div><div class="abs" style="left:923.5px;top:212px;width:472px;height:21.5px;background:#dcdcdc"></div><div class="cb" style="left:927.2px;top:215.1px"></div><svg class="ico" style="left:928.7px;top:217px" width="13" height="13" viewBox="0 0 13 13"><path d="M1.8 6.2 L3.2 5.6 L5.3 10.3 L10.3 1.2" fill="none" stroke="#111" stroke-width="1.9" stroke-linejoin="miter"/></svg><div class="cb" style="left:961.2px;top:215.1px"></div><div class="abs" style="left:996px;top:215.5px;width:16.5px;height:15px;background:#dbe9f8;border:1px solid #9fb2c6;border-radius:1.5px;font-family:'Liberation Serif',serif;font-size:12.5px;line-height:13px;text-align:center;color:#555">T</div><div class="abs" style="left:1021.7px;top:214.8px;font-size:16px;letter-spacing:0px;color:#161616;white-space:pre">Source</div><div class="cb" style="left:927.2px;top:237.1px"></div><svg class="ico" style="left:928.7px;top:239px" width="13" height="13" viewBox="0 0 13 13"><path d="M1.8 6.2 L3.2 5.6 L5.3 10.3 L10.3 1.2" fill="none" stroke="#111" stroke-width="1.9" stroke-linejoin="miter"/></svg><div class="cb" style="left:961.2px;top:237.1px"></div><div class="abs" style="left:996px;top:237.5px;width:16.5px;height:15px;background:#f4f4f4;border:1px solid #9a9a9a;border-radius:1.5px;font-family:'Liberation Serif',serif;font-size:12.5px;line-height:13px;text-align:center;color:#555">T</div><div class="abs" style="left:1021.7px;top:236.8px;font-size:16px;letter-spacing:0px;color:#161616;white-space:pre">Title</div><div class="cb" style="left:927.2px;top:259.1px"></div><svg class="ico" style="left:928.7px;top:261px" width="13" height="13" viewBox="0 0 13 13"><path d="M1.8 6.2 L3.2 5.6 L5.3 10.3 L10.3 1.2" fill="none" stroke="#111" stroke-width="1.9" stroke-linejoin="miter"/></svg><div class="cb" style="left:961.2px;top:259.1px"></div><svg class="ico" style="left:995.5px;top:258.5px" width="18" height="17" viewBox="0 0 18 17"><defs><linearGradient id="mg" x1="0" x2="1"><stop offset="0" stop-color="#bdbdbd"/><stop offset="1" stop-color="#f0f0f0"/></linearGradient></defs><path d="M3.2 1.8 H16.4 V15 H2.7 C1.5 15 1 14.1 1 13.1 V1.5 C1 -0.1 3.2 -0.1 3.2 1.5 Z" fill="url(#mg)" stroke="#8a8a8a" stroke-width="1" stroke-linejoin="round"/><path d="M3.2 1.8 V12.6 C3.2 13.9 2.2 14.2 1.2 13.8" fill="none" stroke="#9a9a9a" stroke-width="0.8"/></svg><div class="abs" style="left:1021.7px;top:258.2px;font-size:15.5px;letter-spacing:0.25px;color:#161616;white-space:pre">Map 1</div><div class="abs" style="left:1148.9px;top:332.5px;width:21.9px;height:3px;background-image:radial-gradient(circle,#c6c6c6 0.75px,rgba(0,0,0,0) 1.15px);background-size:3.65px 3px"></div><div class="abs" style="left:922px;top:369.8px;width:473px;height:1px;background:#c2c2c2"></div><div class="abs tab" style="left:923px;top:341.3px;width:79.5px;height:28.7px;line-height:30px;letter-spacing:.5px;padding-right:3px">Layout</div><div class="abs tab" style="left:1144px;top:341.3px;width:81.2px;height:28.7px;line-height:30px;letter-spacing:.3px">Guides</div><div class="abs tab on" style="left:1001.7px;top:338.7px;width:143px;height:32.2px;line-height:31px;letter-spacing:.52px;padding-right:2.5px">Item Properties</div><div class="dt" style="left:926.6px;top:376.7px;letter-spacing:.57px">Item Properties</div><svg class="ico" style="left:1362px;top:377px" width="32" height="14" viewBox="0 0 32 14"><rect x="0.6" y="0.6" width="12.6" height="12.6" rx="2.4" fill="#f2f2f2" stroke="#7d7d7d" stroke-width="1.1"/><rect x="5.3" y="2.9" width="5.4" height="5.4" rx="1" fill="none" stroke="#6a6a6a" stroke-width="1"/><rect x="3.1" y="5.3" width="5.4" height="5.4" rx="1" fill="#f2f2f2" stroke="#6a6a6a" stroke-width="1"/><rect x="17.9" y="0.6" width="12.6" height="12.6" rx="2.4" fill="#f2f2f2" stroke="#7d7d7d" stroke-width="1.1"/><path d="M20.9 3.6 L27.5 10.2 M27.5 3.6 L20.9 10.2" stroke="#3c3c3c" stroke-width="2.1" stroke-linecap="square"/></svg><div class="st" style="left:696.5px;letter-spacing:.42px">x: 114.837 mm</div><div class="st" style="left:825.8px;letter-spacing:.7px">y: -14.5304 mm</div><div class="st" style="left:954.2px;letter-spacing:.2px">page: 1</div><div class="abs" style="left:1082.2px;top:780.3px;width:155px;height:28px;background:#fff;border:1.2px solid #b8b8b8;border-radius:3.5px;overflow:hidden"><div class="abs" style="left:130px;top:0;width:24px;height:26px;background:linear-gradient(#fdfdfd,#ededed);border-left:1px solid #c8c8c8"></div></div><div class="st" style="left:1086.8px;top:786.6px;font-size:16px;letter-spacing:.85px">75.3%</div><svg class="ico" style="left:1218.5px;top:792px" width="10" height="6" viewBox="0 0 10 6"><path d="M0.3 0.3 L9.7 0.3 L5 5.6 Z" fill="#555"/></svg><div class="abs" style="left:1247px;top:791px;width:118px;height:5.5px;border-radius:3px;background:#dcdcdc;border:1px solid #bcbcbc"></div><div class="abs" style="left:1246.5px;top:791px;width:10px;height:5.5px;border-radius:3px;background:#4b8fdc;border:1px solid #3f7fc8"></div><div class="abs" style="left:1254px;top:786px;width:15px;height:15.5px;border-radius:3.5px;background:linear-gradient(#ffffff,#f1f1f1);border:1px solid #b8b8b8;box-shadow:0 .5px 1px rgba(0,0,0,.15)"></div><svg class="ico" style="left:1379px;top:795px" width="16" height="16" viewBox="0 0 16 16"><g fill="#c4c4c4"><rect x="12.2" y="2.2" width="1.5" height="1.5"/><rect x="12.2" y="5.9" width="1.5" height="1.5"/><rect x="8.5" y="5.9" width="1.5" height="1.5"/><rect x="12.2" y="9.6" width="1.5" height="1.5"/><rect x="8.5" y="9.6" width="1.5" height="1.5"/><rect x="4.8" y="9.6" width="1.5" height="1.5"/><rect x="12.2" y="13.3" width="1.5" height="1.5"/><rect x="8.5" y="13.3" width="1.5" height="1.5"/><rect x="4.8" y="13.3" width="1.5" height="1.5"/><rect x="1.1" y="13.3" width="1.5" height="1.5"/></g></svg><svg class="abs" style="left:0;top:0;pointer-events:none" width="1400" height="822" viewBox="0 0 1400 822"><defs>
<linearGradient id="gLens" x1="0" y1="0" x2="0" y2="1"><stop offset="0" stop-color="#fdfdfd"/><stop offset="1" stop-color="#dedede"/></linearGradient>
<linearGradient id="gSky" x1="0" y1="0" x2="0" y2="1"><stop offset="0" stop-color="#4a9be6"/><stop offset="1" stop-color="#8cc8f4"/></linearGradient>
<linearGradient id="gSand" x1="0" y1="0" x2="0" y2="1"><stop offset="0" stop-color="#d8c070"/><stop offset="1" stop-color="#b89a3a"/></linearGradient>
<linearGradient id="gBadge" x1="0" y1="0" x2="0" y2="1"><stop offset="0" stop-color="#c9a93a"/><stop offset="1" stop-color="#b8962a"/></linearGradient>
<linearGradient id="gPr" x1="0" y1="0" x2="0" y2="1"><stop offset="0" stop-color="#86a8d2"/><stop offset="1" stop-color="#5f88ba"/></linearGradient>
<linearGradient id="gScroll" x1="0" y1="0" x2="1" y2="0"><stop offset="0" stop-color="#c4c4c4"/><stop offset="0.25" stop-color="#f2f2f2"/><stop offset="1" stop-color="#dcdcdc"/></linearGradient>
<linearGradient id="gShk" x1="0" y1="0" x2="1" y2="0"><stop offset="0" stop-color="#9a9a9a"/><stop offset="0.5" stop-color="#e8e8e8"/><stop offset="1" stop-color="#9a9a9a"/></linearGradient>
<linearGradient id="gRef" x1="0" y1="0" x2="1" y2="1"><stop offset="0" stop-color="#8ab6e4"/><stop offset="1" stop-color="#3f7cc0"/></linearGradient><linearGradient id="gRef2" x1="0" y1="0" x2="1" y2="1"><stop offset="0" stop-color="#3f78ba"/><stop offset="1" stop-color="#6a9fd8"/></linearGradient>
</defs><rect x="21.3" y="44.8" width="24.5" height="25.6" rx="3.2" fill="#6f97c6" stroke="#5b82b0" stroke-width="1"/><rect x="25.3" y="45.4" width="17.0" height="10.8" fill="#ececec" stroke="#c9c9c9" stroke-width="0.5"/><path d="M27.3 48.4 H40.199999999999996 M27.3 51.0 H40.199999999999996 M27.3 53.599999999999994 H40.199999999999996" stroke="#6a6a6a" stroke-width="1.15"/><rect x="26.1" y="61.8" width="14.7" height="7.6" fill="#f3f3f3" stroke="#d0d0d0" stroke-width="0.5"/><rect x="28.5" y="63.0" width="3.2" height="5.2" fill="#2f4f7a"/><path d="M69.2 46.6 H88.7 L94.7 52.6 V70.0 H69.2 Z" fill="#fff" stroke="#7d7d7d" stroke-width="1.1" stroke-linejoin="round"/><path d="M88.7 46.6 V52.6 H94.7" fill="#f0f0f0" stroke="#7d7d7d" stroke-width="0.9900000000000001" stroke-linejoin="round"/><rect x="77" y="48.5" width="15" height="19" fill="none" stroke="#a9c2ee" stroke-width="0.8"/><path d="M71.4 47.2 H82.8 V53.4 H77.1 V70.9 H71.4 Z" fill="#f7d560" stroke="#dcb43a" stroke-width="0.9" stroke-linejoin="round"/><path d="M72.6 56 H75.4 M72.6 58.4 H75.4 M72.6 60.8 H75.4 M72.6 63.2 H75.4 M72.6 65.6 H75.4 M72.6 68 H75.4" stroke="#c89c28" stroke-width="0.8"/><g transform="translate(83.3,59.3)" ><rect x="0" y="0" width="13.4" height="13.4" rx="2.2" fill="url(#gBadge)" stroke="#b08f22" stroke-width="0.6"/><line x1="8.90" y1="6.70" x2="11.60" y2="6.70" stroke="#fff" stroke-width="1.5" stroke-linecap="round"/><line x1="8.26" y1="8.26" x2="9.60" y2="9.60" stroke="#fff" stroke-width="1.5" stroke-linecap="round"/><line x1="6.70" y1="8.90" x2="6.70" y2="11.60" stroke="#fff" stroke-width="1.5" stroke-linecap="round"/><line x1="5.14" y1="8.26" x2="3.80" y2="9.60" stroke="#fff" stroke-width="1.5" stroke-linecap="round"/><line x1="4.50" y1="6.70" x2="1.80" y2="6.70" stroke="#fff" stroke-width="1.5" stroke-linecap="round"/><line x1="5.14" y1="5.14" x2="3.80" y2="3.80" stroke="#fff" stroke-width="1.5" stroke-linecap="round"/><line x1="6.70" y1="4.50" x2="6.70" y2="1.80" stroke="#fff" stroke-width="1.5" stroke-linecap="round"/><line x1="8.26" y1="5.14" x2="9.60" y2="3.80" stroke="#fff" stroke-width="1.5" stroke-linecap="round"/><circle cx="6.7" cy="6.7" r="2.7" fill="#fff"/><circle cx="6.7" cy="6.7" r="1.25" fill="#d9bf5a"/></g><rect x="107.6" y="46.8" width="23" height="23" fill="#d8d8d8" stroke="#7d7d7d" stroke-width="1.1"/><path d="M111.8 44.2 H130.6 L136.2 49.800000000000004 V66.4 H111.8 Z" fill="#fff" stroke="#7d7d7d" stroke-width="1.1" stroke-linejoin="round"/><path d="M130.6 44.2 V49.800000000000004 H136.2" fill="#f0f0f0" stroke="#7d7d7d" stroke-width="0.9900000000000001" stroke-linejoin="round"/><path d="M114.3 46.6 H129 M114.3 46.6 V64 H134 V51" fill="none" stroke="#a9c2ee" stroke-width="0.8"/><g transform="translate(123.3,59.3)" ><rect x="0" y="0" width="13.4" height="13.4" rx="2.2" fill="url(#gBadge)" stroke="#b08f22" stroke-width="0.6"/><line x1="8.90" y1="6.70" x2="11.60" y2="6.70" stroke="#fff" stroke-width="1.5" stroke-linecap="round"/><line x1="8.26" y1="8.26" x2="9.60" y2="9.60" stroke="#fff" stroke-width="1.5" stroke-linecap="round"/><line x1="6.70" y1="8.90" x2="6.70" y2="11.60" stroke="#fff" stroke-width="1.5" stroke-linecap="round"/><line x1="5.14" y1="8.26" x2="3.80" y2="9.60" stroke="#fff" stroke-width="1.5" stroke-linecap="round"/><line x1="4.50" y1="6.70" x2="1.80" y2="6.70" stroke="#fff" stroke-width="1.5" stroke-linecap="round"/><line x1="5.14" y1="5.14" x2="3.80" y2="3.80" stroke="#fff" stroke-width="1.5" stroke-linecap="round"/><line x1="6.70" y1="4.50" x2="6.70" y2="1.80" stroke="#fff" stroke-width="1.5" stroke-linecap="round"/><line x1="8.26" y1="5.14" x2="9.60" y2="3.80" stroke="#fff" stroke-width="1.5" stroke-linecap="round"/><circle cx="6.7" cy="6.7" r="2.7" fill="#fff"/><circle cx="6.7" cy="6.7" r="1.25" fill="#d9bf5a"/></g><path d="M148.9 46.5 H169.1 L175.1 52.5 V70.1 H148.9 Z" fill="#fff" stroke="#7d7d7d" stroke-width="1.1" stroke-linejoin="round"/><path d="M169.1 46.5 V52.5 H175.1" fill="#f0f0f0" stroke="#7d7d7d" stroke-width="0.9900000000000001" stroke-linejoin="round"/><rect x="151.4" y="49" width="20.6" height="18.4" fill="none" stroke="#a9c2ee" stroke-width="0.9"/><g transform="translate(162.6,56.2) rotate(51.0)"><rect x="3.5" y="-2.0" width="15.553608582103283" height="4.0" rx="1.3" fill="#d8c48a" stroke="#6e5a2a" stroke-width="0.9"/><rect x="8.00251560448338" y="-2.0" width="9.526804291051642" height="4.0" fill="#c9ae62" stroke="none"/><path d="M4.6 -2.2 L1.5 -4.9 A5.3 5.3 0 0 0 -5.2 -1.6 L-1.2 -1.5 L-1.2 1.5 L-5.2 1.6 A5.3 5.3 0 0 0 1.5 4.9 L4.6 2.2 Z" fill="#eeeeee" stroke="#7a7a7a" stroke-width="0.9" stroke-linejoin="round"/></g><path d="M189.2 48.6 Q189.2 47.3 190.5 47.3 H196 Q197 47.3 197.4 48.3 L198.2 50.2 H210.6 Q212 50.2 212 51.6 V53.5 H192 L189.2 66 Z" fill="#f0cc62" stroke="#d8b148" stroke-width="1" stroke-linejoin="round"/><path d="M192.6 53.3 H214.2 Q215.6 53.3 215.3 54.7 L212.6 67 Q212.3 68.3 210.9 68.3 H190.3 Q188.9 68.3 189.2 66.9 L191.3 54.6 Q191.5 53.3 192.6 53.3 Z" fill="#f8d86c" stroke="#dcb64c" stroke-width="1" stroke-linejoin="round"/><rect x="230.2" y="45.0" width="23.4" height="25.2" rx="3.2" fill="#6f97c6" stroke="#5b82b0" stroke-width="1"/><rect x="234.2" y="45.6" width="15.899999999999999" height="10.8" fill="#ececec" stroke="#c9c9c9" stroke-width="0.5"/><path d="M236.2 48.6 H248.0 M236.2 51.2 H248.0 M236.2 53.8 H248.0" stroke="#6a6a6a" stroke-width="1.15"/><rect x="235.0" y="62.0" width="13.599999999999998" height="7.6" fill="#f3f3f3" stroke="#d0d0d0" stroke-width="0.5"/><rect x="237.39999999999998" y="63.2" width="3.2" height="5.2" fill="#2f4f7a"/><rect x="244.5" y="60.6" width="12" height="12" rx="2.4" fill="#5f8f50" stroke="#4f7d42" stroke-width="0.8"/><line x1="247.2" y1="69.8" x2="253.8" y2="63.4" stroke="#fff" stroke-width="2.5" stroke-linecap="round"/><path d="M281.1 45.5 H294.90000000000003 L300.3 50.9 V70.9 H281.1 Z" fill="#fff" stroke="#7d7d7d" stroke-width="1.1" stroke-linejoin="round"/><path d="M294.90000000000003 45.5 V50.9 H300.3" fill="#f0f0f0" stroke="#7d7d7d" stroke-width="0.9900000000000001" stroke-linejoin="round"/><g transform="translate(291.8,59.3)" ><rect x="0" y="0" width="13.3" height="13.3" rx="2.2" fill="url(#gBadge)" stroke="#b08f22" stroke-width="0.6"/><line x1="8.85" y1="6.65" x2="11.55" y2="6.65" stroke="#fff" stroke-width="1.5" stroke-linecap="round"/><line x1="8.21" y1="8.21" x2="9.55" y2="9.55" stroke="#fff" stroke-width="1.5" stroke-linecap="round"/><line x1="6.65" y1="8.85" x2="6.65" y2="11.55" stroke="#fff" stroke-width="1.5" stroke-linecap="round"/><line x1="5.09" y1="8.21" x2="3.75" y2="9.55" stroke="#fff" stroke-width="1.5" stroke-linecap="round"/><line x1="4.45" y1="6.65" x2="1.75" y2="6.65" stroke="#fff" stroke-width="1.5" stroke-linecap="round"/><line x1="5.09" y1="5.09" x2="3.75" y2="3.75" stroke="#fff" stroke-width="1.5" stroke-linecap="round"/><line x1="6.65" y1="4.45" x2="6.65" y2="1.75" stroke="#fff" stroke-width="1.5" stroke-linecap="round"/><line x1="8.21" y1="5.09" x2="9.55" y2="3.75" stroke="#fff" stroke-width="1.5" stroke-linecap="round"/><circle cx="6.65" cy="6.65" r="2.7" fill="#fff"/><circle cx="6.65" cy="6.65" r="1.25" fill="#d9bf5a"/></g><g transform="translate(326.9,46.3)" ><rect x="6.6" y="0" width="11" height="7.4" fill="#fbfbfb" stroke="#8e8e8e" stroke-width="1"/><rect x="0" y="4.6" width="23.9" height="13.4" rx="3.6" fill="url(#gPr)" stroke="#54799f" stroke-width="1"/><rect x="5.2" y="11.2" width="13.6" height="3.4" fill="#3c4652"/><rect x="6.2" y="13.6" width="11.8" height="9.8" fill="#fbfbfb" stroke="#8e8e8e" stroke-width="1"/><path d="M8.2 16.4 H16 M8.2 18.6 H16 M8.2 20.8 H16" stroke="#7a7a7a" stroke-width="0.9"/></g><path d="M366.2 44.3 H379.8 L385.2 49.699999999999996 V69.8 H366.2 Z" fill="#fff" stroke="#7d7d7d" stroke-width="1.1" stroke-linejoin="round"/><path d="M379.8 44.3 V49.699999999999996 H385.2" fill="#f0f0f0" stroke="#7d7d7d" stroke-width="0.9900000000000001" stroke-linejoin="round"/><rect x="367.4" y="52.8" width="17.6" height="11.8" fill="url(#gSky)" stroke="#4a78b4" stroke-width="0.8"/><path d="M367.8 60.2 L373.2 56.4 L384.6 60.8 V64.2 H367.8 Z" fill="url(#gSand)"/><g transform="translate(380.1,59.2)" ><rect x="0" y="0" width="13.6" height="13.6" rx="2.4" fill="#3d5a73" stroke="#2e465c" stroke-width="0.7"/><path d="M6.2 3.6 H3.4 V10 H6.2" fill="none" stroke="#fff" stroke-width="1.7"/><path d="M5.6 6.8 H9.3" stroke="#fff" stroke-width="1.7"/><path d="M8.6 3.9 L11.6 6.8 L8.6 9.7 Z" fill="#fff"/></g><path d="M406.3 44.3 H419.90000000000003 L425.3 49.699999999999996 V69.8 H406.3 Z" fill="#fff" stroke="#7d7d7d" stroke-width="1.1" stroke-linejoin="round"/><path d="M419.90000000000003 44.3 V49.699999999999996 H425.3" fill="#f0f0f0" stroke="#7d7d7d" stroke-width="0.9900000000000001" stroke-linejoin="round"/><line x1="415.30" y1="60.50" x2="415.30" y2="65.00" stroke="#f59a23" stroke-width="2.1" stroke-linecap="round"/><line x1="414.03" y1="59.97" x2="410.85" y2="63.15" stroke="#f59a23" stroke-width="2.1" stroke-linecap="round"/><line x1="413.50" y1="58.70" x2="409.00" y2="58.70" stroke="#f59a23" stroke-width="2.1" stroke-linecap="round"/><line x1="414.03" y1="57.43" x2="410.85" y2="54.25" stroke="#f59a23" stroke-width="2.1" stroke-linecap="round"/><line x1="415.30" y1="56.90" x2="415.30" y2="52.40" stroke="#f59a23" stroke-width="2.1" stroke-linecap="round"/><line x1="416.57" y1="57.43" x2="419.75" y2="54.25" stroke="#f59a23" stroke-width="2.1" stroke-linecap="round"/><line x1="417.10" y1="58.70" x2="421.60" y2="58.70" stroke="#f59a23" stroke-width="2.1" stroke-linecap="round"/><line x1="416.57" y1="59.97" x2="419.75" y2="63.15" stroke="#f59a23" stroke-width="2.1" stroke-linecap="round"/><g transform="translate(420.1,59.2)" ><rect x="0" y="0" width="13.6" height="13.6" rx="2.4" fill="#3d5a73" stroke="#2e465c" stroke-width="0.7"/><path d="M6.2 3.6 H3.4 V10 H6.2" fill="none" stroke="#fff" stroke-width="1.7"/><path d="M5.6 6.8 H9.3" stroke="#fff" stroke-width="1.7"/><path d="M8.6 3.9 L11.6 6.8 L8.6 9.7 Z" fill="#fff"/></g><path d="M446.1 44.3 H459.70000000000005 L465.1 49.699999999999996 V69.8 H446.1 Z" fill="#fff" stroke="#7d7d7d" stroke-width="1.1" stroke-linejoin="round"/><path d="M459.70000000000005 44.3 V49.699999999999996 H465.1" fill="#f0f0f0" stroke="#7d7d7d" stroke-width="0.9900000000000001" stroke-linejoin="round"/><path d="M455.2 50.2 C456.6 50.4 456.2 55 455.4 58 C457 61 459.6 62.3 463.2 62.4 M455.4 58 C454 61.4 451.4 65 449 65.3 C447.6 64.6 450 61.6 455.6 60.4 C458 59.8 460.6 59.7 462.6 60.4" fill="none" stroke="#e2574c" stroke-width="1.7" stroke-linecap="round"/><g transform="translate(460.2,59.2)" ><rect x="0" y="0" width="13.6" height="13.6" rx="2.4" fill="#3d5a73" stroke="#2e465c" stroke-width="0.7"/><path d="M6.2 3.6 H3.4 V10 H6.2" fill="none" stroke="#fff" stroke-width="1.7"/><path d="M5.6 6.8 H9.3" stroke="#fff" stroke-width="1.7"/><path d="M8.6 3.9 L11.6 6.8 L8.6 9.7 Z" fill="#fff"/></g><path d="M488.1 56.8 L496.5 47 L496.5 52.3 L503 52.4 C507.6 52.8 510.2 55.8 510 59.8 C509.8 64.8 505.6 68.6 499.4 69 L498.9 66.2 C501.8 65.6 503.8 64 503.7 61.8 C503.6 59.8 502 59 500 59 L496.5 59.4 L496.5 66.6 Z" transform="" fill="#de8148" stroke="#d07038" stroke-width="0.7" stroke-linejoin="round"/><path d="M488.1 56.8 L496.5 47 L496.5 52.3 L503 52.4 C507.6 52.8 510.2 55.8 510 59.8 C509.8 64.8 505.6 68.6 499.4 69 L498.9 66.2 C501.8 65.6 503.8 64 503.7 61.8 C503.6 59.8 502 59 500 59 L496.5 59.4 L496.5 66.6 Z" transform="translate(1038,0) scale(-1,1)" fill="#d6d9d9" stroke="#cdd0d0" stroke-width="0.7" stroke-linejoin="round"/><rect x="584.6" y="47.4" width="28.2" height="21" rx="3.6" fill="#dcdee0" stroke="#c6c9cc" stroke-width="1.2"/><path d="M592 48 V68 M599 48 V68 M606 48 V68 M585 54.5 H612.6 M585 61.5 H612.6" stroke="#eceeef" stroke-width="0.9"/><path d="M589 52 h4 v2 h-3z M596 51 h5 l-1 6 h-2 l-2 -3z M603 52 h5 v3 h-4z M597 58 h3 v5 h-2z M606 62 h3 v2 h-3z M590 57 h2 v3 h-2z" fill="#d0d3d6"/><rect x="626.5" y="45.5" width="3.6" height="25.2" rx="1.2" fill="#d3d6d9"/><path d="M630.4 58.1 L642.4 46.3 V53.2 H649.0 Q650.6 53.2 650.6 54.800000000000004 V61.4 Q650.6 63.0 649.0 63.0 H642.4 V69.9 Z" fill="#d3d6d9" stroke="#d3d6d9" stroke-width="0.6" stroke-linejoin="round"/><path d="M669.0 58.1 L681.0 46.3 V53.2 H687.6 Q689.2 53.2 689.2 54.800000000000004 V61.4 Q689.2 63.0 687.6 63.0 H681.0 V69.9 Z" fill="#d3d6d9" stroke="#d3d6d9" stroke-width="0.6" stroke-linejoin="round"/><path d="M831.4 58.1 L819.4 46.3 V53.2 H812.8 Q811.1999999999999 53.2 811.1999999999999 54.800000000000004 V61.4 Q811.1999999999999 63.0 812.8 63.0 H819.4 V69.9 Z" fill="#d3d6d9" stroke="#d3d6d9" stroke-width="0.6" stroke-linejoin="round"/><path d="M870.2 58.1 L858.2 46.3 V53.2 H851.6 Q850.0 53.2 850.0 54.800000000000004 V61.4 Q850.0 63.0 851.6 63.0 H858.2 V69.9 Z" fill="#d3d6d9" stroke="#d3d6d9" stroke-width="0.6" stroke-linejoin="round"/><rect x="870.0" y="45.5" width="3.6" height="25.2" rx="1.2" fill="#d3d6d9"/><g transform="translate(889.9,46.3)" ><rect x="6.6" y="0" width="11" height="7.4" fill="#f1f1f1" stroke="#d4d4d4" stroke-width="1"/><rect x="0" y="4.6" width="23.9" height="13.4" rx="3.6" fill="#d5d8db" stroke="#c9ccd0" stroke-width="1"/><rect x="5.2" y="11.2" width="13.6" height="3.4" fill="#c2c5c8"/><rect x="6.2" y="13.6" width="11.8" height="9.8" fill="#f1f1f1" stroke="#d4d4d4" stroke-width="1"/><path d="M8.2 16.4 H16 M8.2 18.6 H16 M8.2 20.8 H16" stroke="#d2d2d2" stroke-width="0.9"/></g><path d="M929.0 44.3 H942.6 L948.0 49.699999999999996 V69.8 H929.0 Z" fill="#f3f3f3" stroke="#d2d2d2" stroke-width="1.1" stroke-linejoin="round"/><path d="M942.6 44.3 V49.699999999999996 H948.0" fill="#f0f0f0" stroke="#d2d2d2" stroke-width="0.9900000000000001" stroke-linejoin="round"/><rect x="930.4" y="52.8" width="17" height="11.8" fill="#dfe1e2" stroke="#d0d2d4" stroke-width="0.7"/><rect x="942.3" y="59.3" width="13.4" height="13.4" rx="2.4" fill="#c9cdd1" stroke="#bcc0c4" stroke-width="0.7"/><path d="M948.5 62.9 H945.7 V69.3 H948.5 M947.9 66.1 H951.6" fill="none" stroke="#eef0f1" stroke-width="1.6"/><path d="M950.9 63.2 L953.9 66.1 L950.9 69 Z" fill="#eef0f1"/><path d="M964.0 56.3 H972.8 L968.4 61.3 Z" fill="#2f2f2f"/><rect x="982.0" y="45.7" width="23.6" height="17.4" rx="2.8" fill="#b4cdee" stroke="#5a84b8" stroke-width="1.2"/><path d="M988 46.5 V62.5 M994 46.5 V62.5 M1000 46.5 V62.5 M982.6 51.5 H1005 M982.6 57.3 H1005" stroke="#dbe8f8" stroke-width="0.8"/><path d="M985 49 h4 v2 h-3z M991 48 h5 l-1 5 h-2 l-2 -3z M998 49 h5 v3 h-4z M992 56 h3 v4 h-2z M1000 58 h3 v2 h-3z M985 54 h2 v3 h-2z" fill="#4d78ae"/><g transform="translate(995.6,54.2) rotate(50.2)"><rect x="3.5" y="-2.0" width="18.36869909253863" height="4.0" rx="1.3" fill="#d8c48a" stroke="#6e5a2a" stroke-width="0.9"/><rect x="9.184853618866224" y="-2.0" width="10.934349546269315" height="4.0" fill="#c9ae62" stroke="none"/><path d="M4.6 -2.2 L1.5 -4.9 A5.3 5.3 0 0 0 -5.2 -1.6 L-1.2 -1.5 L-1.2 1.5 L-5.2 1.6 A5.3 5.3 0 0 0 1.5 4.9 L4.6 2.2 Z" fill="#eeeeee" stroke="#7a7a7a" stroke-width="0.9" stroke-linejoin="round"/></g><line x1="30.08" y1="108.52" x2="20.68" y2="117.62" stroke="#2a2a2a" stroke-width="4.3" stroke-linecap="butt"/><line x1="26.28" y1="112.22" x2="21.18" y2="117.12" stroke="#f2c53a" stroke-width="3.0" stroke-linecap="butt"/><line x1="30.48" y1="108.12" x2="26.68" y2="111.82" stroke="#111" stroke-width="4.2"/><circle cx="36.3" cy="102.3" r="10.3" fill="url(#gLens)" stroke="#858585" stroke-width="1.35"/><path d="M36.3 95.2 V109.4 M29.2 102.3 H43.4" stroke="#5d8cc4" stroke-width="3"/><line x1="70.08" y1="108.52" x2="60.68" y2="117.62" stroke="#2a2a2a" stroke-width="4.3" stroke-linecap="butt"/><line x1="66.28" y1="112.22" x2="61.18" y2="117.12" stroke="#f2c53a" stroke-width="3.0" stroke-linecap="butt"/><line x1="70.48" y1="108.12" x2="66.68" y2="111.82" stroke="#111" stroke-width="4.2"/><circle cx="76.3" cy="102.3" r="10.3" fill="url(#gLens)" stroke="#858585" stroke-width="1.35"/><path d="M69.4 102.3 H83.2" stroke="#5d8cc4" stroke-width="3"/><rect x="101.6" y="93.8" width="12" height="15" fill="#f4f4f4" stroke="#9a9a9a" stroke-width="1"/><line x1="110.28" y1="108.52" x2="100.88" y2="117.62" stroke="#2a2a2a" stroke-width="4.3" stroke-linecap="butt"/><line x1="106.48" y1="112.22" x2="101.38" y2="117.12" stroke="#f2c53a" stroke-width="3.0" stroke-linecap="butt"/><line x1="110.68" y1="108.12" x2="106.88" y2="111.82" stroke="#111" stroke-width="4.2"/><circle cx="116.5" cy="102.3" r="10.3" fill="url(#gLens)" stroke="#858585" stroke-width="1.35"/><text x="116.4" y="107" text-anchor="middle" font-family="Liberation Sans, sans-serif" font-weight="700" font-size="12.5" letter-spacing="-0.9" fill="#3c3c3c">1:1</text><line x1="150.24" y1="108.06" x2="140.84" y2="117.16" stroke="#2a2a2a" stroke-width="4.3" stroke-linecap="butt"/><line x1="146.44" y1="111.76" x2="141.34" y2="116.66" stroke="#f2c53a" stroke-width="3.0" stroke-linecap="butt"/><line x1="150.64" y1="107.66" x2="146.84" y2="111.36" stroke="#111" stroke-width="4.2"/><circle cx="156.1" cy="102.2" r="9.8" fill="url(#gLens)" stroke="#858585" stroke-width="1.35"/><path d="M143.9 91.1 H153 L151 94.6 L153.3 97.1 L150.4 101.1 L147.3 98 L143.9 100.3 Z" fill="#6a98cc" stroke="#4a78aa" stroke-width="0.6" stroke-linejoin="round"/><path d="M167.9 91.1 H158.7 L160.7 94.6 L158.1 97.4 L161.3 101.1 L164.4 98 L167.9 100.3 Z" fill="#6a98cc" stroke="#4a78aa" stroke-width="0.6" stroke-linejoin="round"/><path d="M167.9 114.9 V105.7 L164.4 108 L161.3 105.1 L158.1 108.9 L160.7 111.4 L158.1 114.9 Z" fill="#6a98cc" stroke="#4a78aa" stroke-width="0.6" stroke-linejoin="round"/><path d="M181.5 103.2 C181.7 96 187 91.6 193.6 91.6 C197.6 91.6 200.8 93.2 202.9 95.7 L205.9 93.1 L205.9 104.9 L194.8 104.6 L198.3 100.7 C197 98.7 195.2 97.7 193 97.7 C188.6 97.7 184.4 99.7 181.5 103.2 Z" fill="url(#gRef)" stroke="#4a80c0" stroke-width="0.5" stroke-linejoin="round"/><path d="M181.5 103.2 C181.7 96 187 91.6 193.6 91.6 C197.6 91.6 200.8 93.2 202.9 95.7 L205.9 93.1 L205.9 104.9 L194.8 104.6 L198.3 100.7 C197 98.7 195.2 97.7 193 97.7 C188.6 97.7 184.4 99.7 181.5 103.2 Z" transform="rotate(180 193.6 105.3)" fill="url(#gRef2)" stroke="#3f74b4" stroke-width="0.5" stroke-linejoin="round"/><rect x="241.2" y="95" width="15.6" height="13.2" rx="1" fill="#cfe3f7" stroke="#6e8eb2" stroke-width="1"/><path d="M252.6 108 V102.2 A4.9 5.2 0 0 1 262.4 102.2 V108" fill="none" stroke="#8f8f8f" stroke-width="3.4"/><path d="M252.6 108 V102.2 A4.9 5.2 0 0 1 262.4 102.2 V108" fill="none" stroke="#e6e6e6" stroke-width="1.5"/><rect x="248.6" y="107.3" width="17.4" height="10.8" rx="1.6" fill="#f3d24c" stroke="#d9b234" stroke-width="1"/><circle cx="296.5" cy="100" r="7.6" fill="#cfe3f7" stroke="#7f9fc4" stroke-width="1"/><rect x="281.2" y="98.4" width="13" height="13.6" rx="1" fill="#cfe3f7" stroke="#6e8eb2" stroke-width="1"/><path d="M302.4 108 V103.6 A4.7 4.9 0 1 0 294.6 100.4" fill="none" stroke="#8f8f8f" stroke-width="3.3"/><path d="M302.4 108 V103.6 A4.7 4.9 0 1 0 294.6 100.4" fill="none" stroke="#e6e6e6" stroke-width="1.4"/><rect x="288.4" y="107.3" width="17.8" height="10.8" rx="1.6" fill="#f3d24c" stroke="#d9b234" stroke-width="1"/><rect x="323.6" y="103.6" width="15.6" height="10.8" rx="1" fill="#cfe3f7" stroke="#6e8eb2" stroke-width="1"/><circle cx="336.2" cy="101.8" r="7.5" fill="#cfe3f7" stroke="#7f9fc4" stroke-width="1"/><rect x="320.5" y="93.1" width="3" height="3" rx="0.8" fill="#111"/><rect x="342.3" y="93.1" width="3" height="3" rx="0.8" fill="#111"/><rect x="320.5" y="114.7" width="3" height="3" rx="0.8" fill="#111"/><rect x="342.3" y="114.7" width="3" height="3" rx="0.8" fill="#111"/><rect x="363.8" y="104" width="14.8" height="10" rx="1" fill="#f5eca8" stroke="#a8a878" stroke-width="1"/><circle cx="376" cy="101.8" r="7.5" fill="#cfe3f7" stroke="#7f9fc4" stroke-width="1"/><rect x="366.3" y="93.1" width="3" height="3" rx="0.8" fill="#111"/><rect x="382.3" y="93.1" width="3" height="3" rx="0.8" fill="#111"/><rect x="360.3" y="100.3" width="3" height="3" rx="0.8" fill="#111"/><rect x="366.3" y="108.8" width="3" height="3" rx="0.8" fill="#111"/><rect x="382.3" y="108.8" width="3" height="3" rx="0.8" fill="#111"/><rect x="360.3" y="114.7" width="3" height="3" rx="0.8" fill="#111"/><rect x="378.7" y="114.7" width="3" height="3" rx="0.8" fill="#111"/><rect x="401.4" y="103.6" width="18.6" height="13" rx="1" fill="#cfe3f7" stroke="#8fb0d6" stroke-width="1"/><rect x="406.4" y="94" width="18.2" height="13.2" rx="1" fill="#f5eca8" stroke="#9a9a8a" stroke-width="1"/><path d="M423.7 117.3 H429.3 L426.5 120.2 Z" fill="#3a3a3a"/><rect x="441.8" y="94" width="12.4" height="9.4" rx="0.8" fill="#d0f0c8" stroke="#90c888" stroke-width="1"/><rect x="441.8" y="106.4" width="17.2" height="10.2" rx="0.8" fill="#cfe3f7" stroke="#8fb0d6" stroke-width="1"/><path d="M441.5 92.2 V118.6" stroke="#2a2a2a" stroke-width="1.3"/><path d="M463.5 117.3 H469.1 L466.3 120.2 Z" fill="#3a3a3a"/><rect x="480.0" y="100" width="5.4" height="12" rx="0.8" fill="#d0f0c8" stroke="#90c888" stroke-width="1"/><rect x="491.0" y="100" width="7.6" height="16.8" rx="0.8" fill="#cfe3f7" stroke="#8fb0d6" stroke-width="1"/><rect x="502.0" y="100" width="5.4" height="9.4" rx="0.8" fill="#d0f0c8" stroke="#90c888" stroke-width="1"/><path d="M480.3 93.3 V102.8 M491.3 93.3 V102.8 M502.3 93.3 V102.8" stroke="#2a2a2a" stroke-width="1.2"/><path d="M503.3 117.3 H508.90000000000003 L506.1 120.2 Z" fill="#3a3a3a"/><rect x="521.6" y="94" width="13.4" height="22.8" rx="0.8" fill="#cfe3f7" stroke="#8fb0d6" stroke-width="1"/><path d="M522.4 103.4 L525.8 105.8 L522.4 108.2 Z M534.2 103.4 L530.8 105.8 L534.2 108.2 Z" fill="#4a5a6a"/><path d="M525 105.8 H527 M529.4 105.8 H531.6" stroke="#4a5a6a" stroke-width="0.9"/><rect x="538.8" y="94" width="5.6" height="22" rx="0.8" fill="#f5eca8" stroke="#b0a878" stroke-width="1"/><path d="M544.6 94 V117" stroke="#7a7a7a" stroke-width="0.8"/><path d="M543.3 117.3 H548.9 L546.0999999999999 120.2 Z" fill="#3a3a3a"/><path d="M18.1 161 L18.1 151.2 C18.1 148.6 22 148.6 22 151.2 C23.4 149.6 26.2 150.6 26.2 153.2 C27.6 152 30.4 152.8 30.4 155.4 C31.8 154.2 33.8 155 33.8 157 L33.6 165.7 C33.4 168 32.6 169 32.2 170 L30.8 176.5 L20.2 176.6 L18.3 171.7 C17 170 15.6 168.6 14.6 167.1 L12.6 160.4 C11.6 157.8 14 156.2 16 157.6 Z" fill="#fff" stroke="#1a1a1a" stroke-width="1.3" stroke-linejoin="round"/><path d="M22 151.2 V159.3 M26.2 153.2 V159.3 M30.4 155.4 V159.7" fill="none" stroke="#1a1a1a" stroke-width="1.2" stroke-linecap="round"/><path d="M19.6 189.6 H9.4 V205.8 H17" fill="none" stroke="#222" stroke-width="1.4" stroke-dasharray="2.6 1.9"/><line x1="20.64" y1="204.46" x2="10.24" y2="213.86" stroke="#3a3a2a" stroke-width="4.0"/><line x1="17.24" y1="207.66" x2="10.74" y2="213.36" stroke="#f2c53a" stroke-width="2.8"/><line x1="21.04" y1="204.06" x2="17.64" y2="207.26" stroke="#111" stroke-width="4.0"/><circle cx="26.7" cy="198.4" r="9.8" fill="url(#gLens)" stroke="#8a8a8a" stroke-width="1.3"/><path d="M30.7 193.4 v3 M30.7 199.4 v3 M30.7 204.9 h-3 M24.7 204.9 h-3" stroke="#c4c4c4" stroke-width="1.2"/><rect x="11.2" y="230.6" width="19.4" height="19" fill="none" stroke="#444" stroke-width="1" stroke-dasharray="1.2 2.2"/><rect x="9.8" y="228.8" width="3.2" height="3.2" fill="#f4f4f4" stroke="#444" stroke-width="0.8"/><rect x="29.0" y="228.8" width="3.2" height="3.2" fill="#f4f4f4" stroke="#444" stroke-width="0.8"/><rect x="9.8" y="248.0" width="3.2" height="3.2" fill="#f4f4f4" stroke="#444" stroke-width="0.8"/><rect x="29.0" y="248.0" width="3.2" height="3.2" fill="#f4f4f4" stroke="#444" stroke-width="0.8"/><path d="M13.6 229.6 L15 250.4 L19.8 246.2 L23.8 254.6 L27.4 252.8 L23.4 244.8 L30.2 244.2 Z" fill="#fff" stroke="#111" stroke-width="1.2" stroke-linejoin="round"/><path d="M13.2 267.2 C10.4 267.2 10.4 270 10.6 271.2 V288.6 C10.6 290.6 11.8 291.4 13.4 291.4 H34.6 V269.4 H15.4 C15.4 268 14.6 267.2 13.2 267.2 Z" fill="url(#gScroll)" stroke="#9a9a9a" stroke-width="1" stroke-linejoin="round"/><path d="M15.4 269.4 V286 C15.4 288 13 288.6 10.8 288.2" fill="none" stroke="#a8a8a8" stroke-width="0.9"/><path d="M26.6 270.4 L32.2 276.2 H28.8 V279.2 H24.4 V276.2 H21 Z" fill="#4f86c6" stroke="#3a6ea8" stroke-width="0.6"/><path d="M16.6 277 H20.2 V279.6 H22.6 V283.2 H20.2 V286 H16.6 Z" fill="#4f86c6" stroke="#3a6ea8" stroke-width="0.6"/><rect x="30.2" y="281" width="3.6" height="3.6" fill="#4f86c6" stroke="#3a6ea8" stroke-width="0.6"/><rect x="24.6" y="287.2" width="3.6" height="3.6" fill="#4f86c6" stroke="#3a6ea8" stroke-width="0.6"/><path d="M11.9 328.7 L18.3 307.4 L32.7 315" fill="none" stroke="#1a1a1a" stroke-width="1.3"/><path d="M11.9 328.7 L20 322" fill="none" stroke="#1a1a1a" stroke-width="1.1" stroke-dasharray="1.6 1.6"/><g transform="translate(27,323.6) rotate(45)"><rect x="-1.7" y="-8" width="3.4" height="15.6" fill="#b8842c" stroke="#8a6420" stroke-width="0.5"/><rect x="-5.2" y="-9.6" width="10.4" height="3.8" rx="1" fill="#c8c8c8" stroke="#888" stroke-width="0.6"/></g><g transform="translate(26,323.6) rotate(-48)"><rect x="-1.7" y="-7" width="3.4" height="15.6" fill="#f0c838" stroke="#c89c20" stroke-width="0.5"/><rect x="-1.9" y="-12" width="3.8" height="6" fill="#d8d8d8" stroke="#999" stroke-width="0.5"/></g><circle cx="18.3" cy="307.4" r="3.2" fill="#2d82f8"/><circle cx="32.7" cy="315" r="3.2" fill="#2d82f8"/><circle cx="11.9" cy="328.7" r="3.2" fill="#2d82f8"/><path d="M16 349.6 L32.8 348.6 L34.8 362.6 L23 364.6 L9.2 361.2 Z" fill="#e0e0e0" stroke="#a4a4a4" stroke-width="1" stroke-linejoin="round"/><path d="M14 353.4 L33.4 352.6 M11.6 357.4 L34 357 M21.6 349.4 L16 363 M27.4 349 L27 364 M18.6 349.6 L11 361.6" stroke="#bdbdbd" stroke-width="0.7" fill="none"/><g transform="translate(26.2,361.3)" ><rect x="0" y="0" width="11" height="11" rx="2.2" fill="#5f8f50" stroke="#4f7d42" stroke-width="0.8"/><path d="M5.5 2.1 V8.9 M2.1 5.5 H8.9" stroke="#fff" stroke-width="2.5"/></g><path d="M13.2 383.4 C10.4 383.4 10.4 386.2 10.6 387.4 V404.8 C10.6 406.8 11.8 407.6 13.4 407.6 H34.6 V385.6 H15.4 C15.4 384.2 14.6 383.4 13.2 383.4 Z" fill="url(#gScroll)" stroke="#a2a2a2" stroke-width="1" stroke-linejoin="round"/><path d="M15.4 385.6 V402.2 C15.4 404.2 13 404.8 10.8 404.4" fill="none" stroke="#b0b0b0" stroke-width="0.9"/><g transform="translate(26.2,400)" ><rect x="0" y="0" width="11" height="11" rx="2.2" fill="#5f8f50" stroke="#4f7d42" stroke-width="0.8"/><path d="M5.5 2.1 V8.9 M2.1 5.5 H8.9" stroke="#fff" stroke-width="2.5"/></g><rect x="10.8" y="427.6" width="23.8" height="15.4" fill="url(#gSky)" stroke="#8a8a8a" stroke-width="1"/><path d="M11.3 436 L18.4 431.6 L34.1 437.4 V442.5 H11.3 Z" fill="url(#gSand)"/><g transform="translate(26.2,438.9)" ><rect x="0" y="0" width="11" height="11" rx="2.2" fill="#5f8f50" stroke="#4f7d42" stroke-width="0.8"/><path d="M5.5 2.1 V8.9 M2.1 5.5 H8.9" stroke="#fff" stroke-width="2.5"/></g><rect x="10.6" y="466" width="24" height="16" rx="1" fill="#f8f8f8" stroke="#9c9c9c" stroke-width="1"/><text x="22.7" y="479.4" text-anchor="middle" font-family="Liberation Serif, serif" font-size="14.5" fill="#333">T</text><g transform="translate(26.2,478)" ><rect x="0" y="0" width="11" height="11" rx="2.2" fill="#5f8f50" stroke="#4f7d42" stroke-width="0.8"/><path d="M5.5 2.1 V8.9 M2.1 5.5 H8.9" stroke="#fff" stroke-width="2.5"/></g><rect x="12" y="502" width="5.8" height="5.8" rx="0.8" fill="#fbcf3b" stroke="#f0a838" stroke-width="0.9"/><rect x="12" y="509.6" width="5.8" height="5.6" rx="0.8" fill="#e2452a" stroke="#c8381e" stroke-width="0.9"/><rect x="12" y="517.2" width="5.8" height="5.4" rx="0.8" fill="#3fae52" stroke="#1e6e34" stroke-width="0.9"/><path d="M19.2 506.8 H26.2 M19.2 514 H29.8 M19.2 521 H23.8" stroke="#8c8c8c" stroke-width="1.6"/><g transform="translate(26.2,516.6)" ><rect x="0" y="0" width="11" height="11" rx="2.2" fill="#5f8f50" stroke="#4f7d42" stroke-width="0.8"/><path d="M5.5 2.1 V8.9 M2.1 5.5 H8.9" stroke="#fff" stroke-width="2.5"/></g><rect x="9.4" y="548.2" width="26.6" height="4.8" rx="1.4" fill="#fff" stroke="#4a4a4a" stroke-width="1.3"/><path d="M10.4 550.6 H15 M20 550.6 H25.4 M30.4 550.6 H35" stroke="#5a5a5a" stroke-width="2.6"/><path d="M15 550.6 H20 M25.4 550.6 H30.4" stroke="#e2e2e2" stroke-width="2.2"/><g transform="translate(26.2,555.6)" ><rect x="0" y="0" width="11" height="11" rx="2.2" fill="#5f8f50" stroke="#4f7d42" stroke-width="0.8"/><path d="M5.5 2.1 V8.9 M2.1 5.5 H8.9" stroke="#fff" stroke-width="2.5"/></g><path d="M22.8 578.4 L13.4 602.6 L22.4 595.6 L30.6 600 Z" fill="#4e7eb8" stroke="#3d6aa0" stroke-width="0.8" stroke-linejoin="round"/><path d="M22.8 578.4 L22.4 595.6 L30.6 600 Z" fill="#6b96cc"/><text x="22.6" y="594.6" text-anchor="middle" font-family="Liberation Sans, sans-serif" font-weight="700" font-size="7.6" fill="#fff">N</text><g transform="translate(25.2,593.2)" ><rect x="0" y="0" width="11.6" height="11.6" rx="2.2" fill="#5f8f50" stroke="#4f7d42" stroke-width="0.8"/><path d="M5.8 2.1 V9.5 M2.1 5.8 H9.5" stroke="#fff" stroke-width="2.5"/></g><rect x="10.6" y="627.6" width="15.6" height="12" fill="#cfe3f7" stroke="#7ba7d8" stroke-width="1"/><circle cx="27.4" cy="629.4" r="7.4" fill="#f2bcbc" stroke="#e28c8c" stroke-width="1"/><path d="M20.5 616.6 L28.8 630.8 H14.4 Z" fill="#c9edc1" stroke="#8cc982" stroke-width="1" stroke-linejoin="round"/><g transform="translate(26.2,633.1)" ><rect x="0" y="0" width="10.7" height="10.7" rx="2.2" fill="#5f8f50" stroke="#4f7d42" stroke-width="0.8"/><path d="M5.35 2.1 V8.6 M2.1 5.35 H8.6" stroke="#fff" stroke-width="2.5"/></g><path d="M34.2 641.6 H38.6 L36.4 644.6 Z" fill="#222"/><polygon points="22.70,657.25 26.23,664.84 34.68,665.78 28.41,671.42 30.11,679.59 22.70,675.48 15.29,679.59 16.99,671.42 10.72,665.78 19.17,664.84" fill="#fbe5a4" stroke="#f0b482" stroke-width="1.1" stroke-linejoin="round"/><g transform="translate(26.2,671.9)" ><rect x="0" y="0" width="11" height="11" rx="2.2" fill="#5f8f50" stroke="#4f7d42" stroke-width="0.8"/><path d="M5.5 2.1 V8.9 M2.1 5.5 H8.9" stroke="#fff" stroke-width="2.5"/></g><path d="M12.6 717.4 L29.6 700.6" stroke="#333" stroke-width="1.2"/><path d="M34.6 695.6 L26.6 698.4 L31.8 703.6 Z" fill="#fff" stroke="#333" stroke-width="1.1" stroke-linejoin="round"/><rect x="10.8" y="715.8" width="3.4" height="3.4" fill="#111"/><g transform="translate(26.2,710.8)" ><rect x="0" y="0" width="11" height="11" rx="2.2" fill="#5f8f50" stroke="#4f7d42" stroke-width="0.8"/><path d="M5.5 2.1 V8.9 M2.1 5.5 H8.9" stroke="#fff" stroke-width="2.5"/></g><path d="M927.6 200.6 C931 195 940 194.4 945 199.8 C940.6 205.6 931.6 206 927.6 200.6 Z" fill="#f4f4f4" stroke="#9a9a9a" stroke-width="0.9"/><path d="M928.4 197.4 C932 193 940 192.6 944.6 196.6" fill="none" stroke="#b4b4b4" stroke-width="0.8"/><circle cx="935.8" cy="200" r="4.2" fill="#a0a0a0" stroke="#7a7a7a" stroke-width="0.7"/><circle cx="935.8" cy="200" r="2.1" fill="#3a3a3a"/><circle cx="936.8" cy="198.9" r="0.8" fill="#e8e8e8"/><path d="M965.4 201 V197 A3.7 4.1 0 0 1 972.8 197 V201" fill="none" stroke="#8f8f8f" stroke-width="2.2"/><path d="M965.4 201 V197 A3.7 4.1 0 0 1 972.8 197 V201" fill="none" stroke="#d8d8d8" stroke-width="0.9"/><rect x="962.2" y="199.6" width="14" height="9.6" rx="2" fill="#676767"/></svg></div></div></body></html>
